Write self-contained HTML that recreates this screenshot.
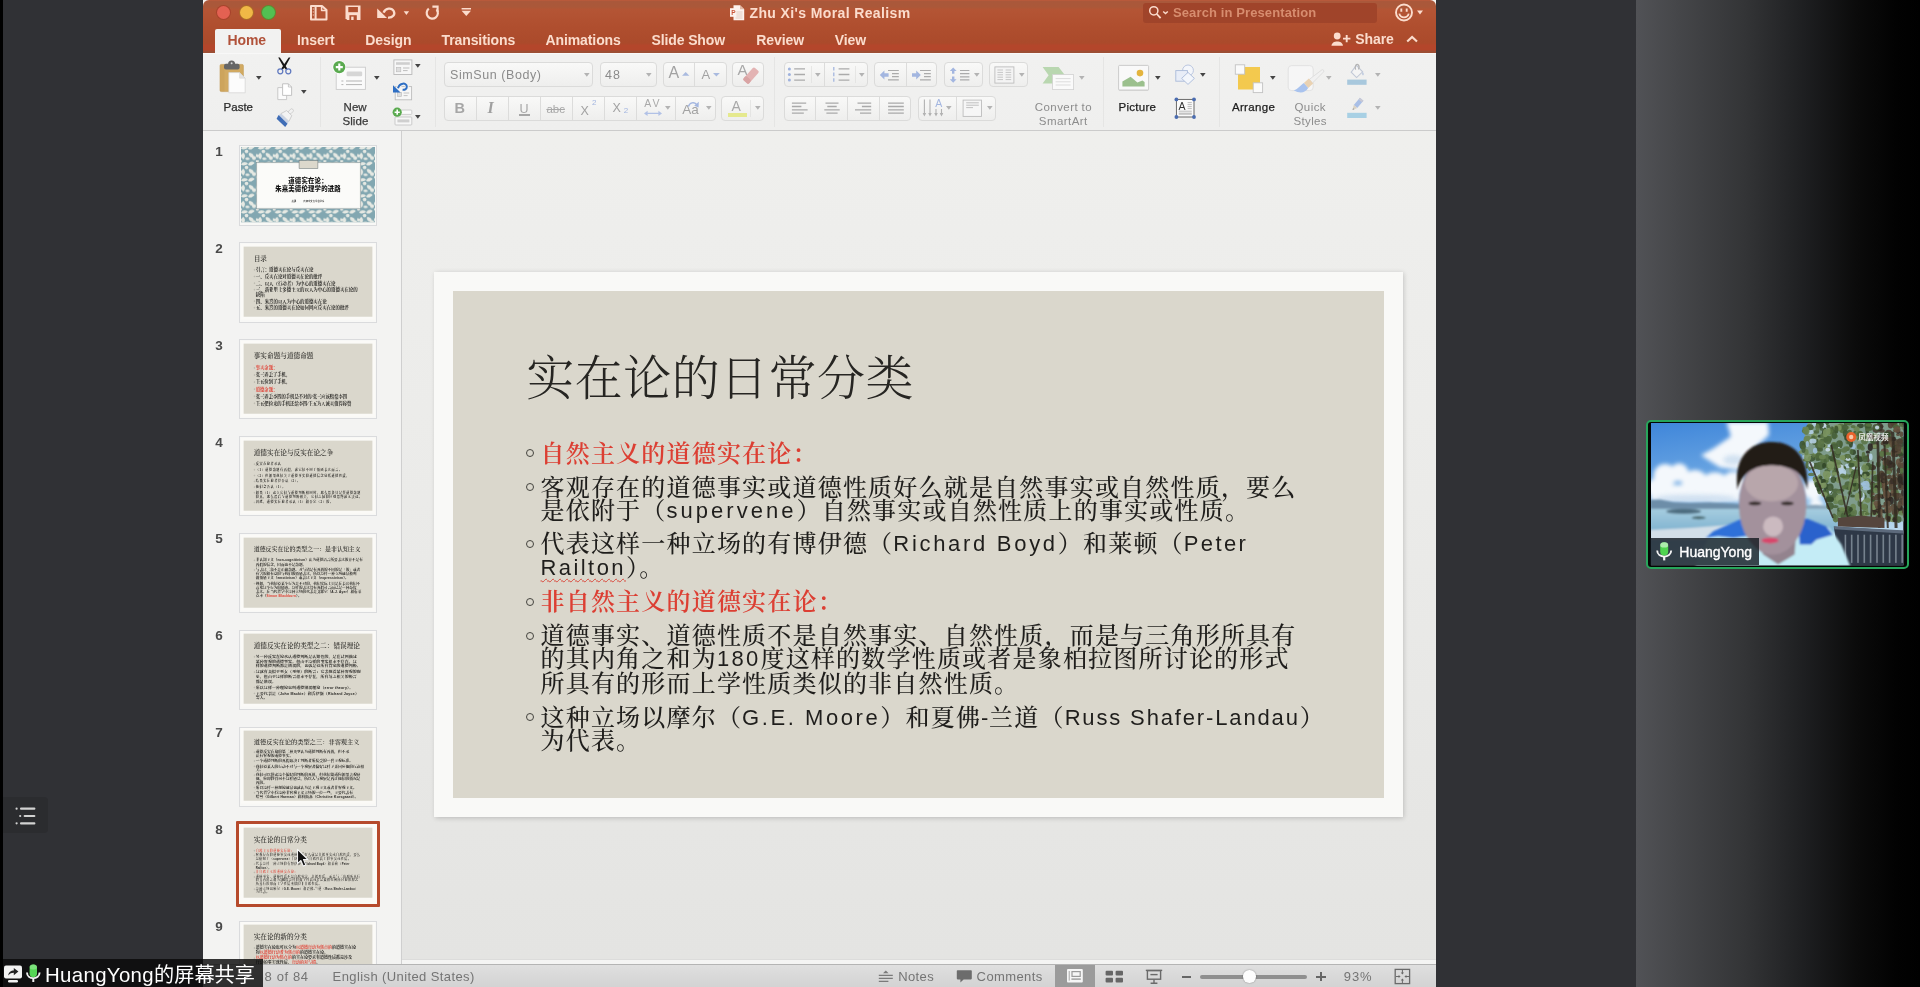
<!DOCTYPE html>
<html lang="zh">
<head>
<meta charset="utf-8">
<title>Zhu Xi's Moral Realism</title>
<style>
*{box-sizing:border-box;margin:0;padding:0}
html,body{width:1920px;height:987px;overflow:hidden;background:#303135}
body{position:relative;font-family:"Liberation Sans","Noto Sans CJK SC",sans-serif;color:#333}
.abs,.abs2 *{position:absolute}
svg{position:absolute;overflow:visible}
#blackl{left:0;top:0;width:3px;height:987px;background:#000}
#rpanel{left:1636px;top:0;width:284px;height:987px;background:linear-gradient(90deg,#515256 0px,#46474a 40px,#333436 110px,#1d1e20 170px,#0b0b0b 220px,#020202 260px,#000 284px)}
#win{left:203px;top:0;width:1233.4px;height:987px;background:linear-gradient(180deg,#efefed 0,#efefed 140px,#ebebe9 500px,#e4e4e2 958px,#e4e4e2 100%);overflow:hidden}
#pc{left:-203px;top:0;width:1920px;height:987px}
#titlebar{left:203px;top:0;width:1233.4px;height:52.5px;border-radius:6px 6px 0 0;box-shadow:0 -8px 0 8px #f4f2ee;background:linear-gradient(180deg,#be5a3b 0,#a9583b 1.6px,#ab5839 7px,#b45535 9.5px,#b04f2f 25px,#ab4a2b 43px,#b4462b 45.5px,#b3462b 50px,#9c4e34 51.4px,#9c4e34 52.5px)}
#ribbon{left:203px;top:52.5px;width:1233.4px;height:78.5px;background:linear-gradient(180deg,#fbfbfb 0,#f1f1f0 1.6px,#efefee 100%);border-bottom:1px solid #cbcbcb}
#thumbs{left:203px;top:131px;width:199px;height:834px;background:#f3f3f2;border-right:1px solid #cfcfcf}
#status{left:203px;top:964px;width:1234px;height:23px;background:linear-gradient(#dfdfdf,#d3d3d3);border-top:1px solid #b4b4b4}
.stx{top:968px;height:18px;line-height:18px;font-size:13px;letter-spacing:.4px;color:#747474;white-space:nowrap}
/* title bar */
.tl{width:13px;height:13px;border-radius:50%;top:5.5px}
.tab{top:31px;height:18px;line-height:18px;font-size:14px;font-weight:bold;color:#fbdccd;white-space:nowrap;letter-spacing:-.1px}
#hometab{left:215px;top:28.5px;width:65.5px;height:25.5px;background:#f2f2f1;border-radius:2px 2px 0 0}

/* ribbon */
.vsep{top:57px;width:1px;height:70px;background:#e5e5e4}
.grp{border:1px solid #dbdbda;border-radius:4px;background:linear-gradient(#f9f9f8,#eeeeed)}
.gdv{width:1px;background:#dcdcdb}
.lbl{top:99px;height:16px;line-height:16px;font-size:11.5px;color:#2b2b2b;white-space:nowrap;-webkit-text-stroke:.25px}
.dtx{color:#8b8b8b;white-space:nowrap}
/* thumbs */
.tnum{left:212px;width:14px;text-align:center;font-size:13.5px;font-weight:bold;color:#4a4a4a;height:16px;line-height:16px}
.tfr{background:#f8f8f6;border:1px solid #dadbdd}
.tsl{width:969px;height:545px;transform:scale(.1383);transform-origin:0 0;background:#fbfaf7;overflow:hidden;font-family:"Liberation Serif","Noto Serif CJK SC",serif;color:#1f1e1c}
.tsl>*{position:absolute}
.tbg{left:19px;top:19px;width:931px;height:507px;background:#dad7cc}
.tt{left:92px;top:69px;height:70px;line-height:70px;font-size:48px;white-space:nowrap;color:#262522;font-weight:500}
.tb{left:107px;white-space:nowrap;font-weight:700}
.tb .r,.tb.r{color:#e0392d}
.tb .e{font-family:"Liberation Sans",sans-serif;font-size:.9em;letter-spacing:.06em}
.tbu{left:93px;width:8px;height:8px;border:1.5px solid #3a3936;border-radius:50%}
.t1{left:0;width:969px;text-align:center;font-family:"Liberation Sans","Noto Sans CJK SC",sans-serif;font-weight:900;font-size:46px;letter-spacing:1.5px;height:56px;line-height:56px;color:#111;white-space:nowrap}
/* slide */
#slideframe{left:434px;top:272px;width:969px;height:545px;background:#f9f9f7;box-shadow:.5px 1px 5px rgba(0,0,0,.2)}
#slidebg{left:19px;top:19px;width:931px;height:507px;background:#dad7cc}
.sl{left:540.5px;height:30px;line-height:30px;font-size:24px;letter-spacing:1.2px;color:#1f1e1c;white-space:nowrap;font-family:"Liberation Serif","Noto Serif CJK SC",serif;font-weight:500}
.sl.red{color:#dc3f33;font-weight:600}
.sl .en{font-family:"Liberation Sans",sans-serif;font-weight:400;font-size:22px;letter-spacing:0;position:relative;top:-1px}
.bl{left:526.3px;width:8.2px;height:8.2px;border:1.7px solid #45443f;border-radius:50%;margin-top:-.3px}
</style>
</head>
<body>
<div id="blackl" class="abs"></div>
<div id="rpanel" class="abs"></div>
<div id="win" class="abs" style="will-change:transform">
<div id="pc" class="abs">
  <!--TITLEBAR-->
  <div id="titlebar" class="abs"></div>
  <div class="abs tl" style="left:217px;background:#e36152;box-shadow:0 0 0 1px #a8432c"></div>
  <div class="abs tl" style="left:239.5px;background:#f0b846;box-shadow:0 0 0 1px #ab6a2a"></div>
  <div class="abs tl" style="left:261.5px;background:#52c052;box-shadow:0 0 0 1px #5f8a30"></div>
  <!-- quick access icons -->
  <svg style="left:309px;top:4px" width="20" height="18" viewBox="0 0 20 18" fill="none" stroke="#fbdccd" stroke-width="2" stroke-linejoin="round">
    <path d="M2 2 H13 L17.5 6 V15.5 H2 Z"/><path d="M6.6 2 V15.5"/><path d="M12.6 2.3 V6.6 H17.3" stroke-width="1.5"/>
    <path d="M4.3 4.5v1M4.3 7.5v1M4.3 10.5v1" stroke-width="1.1"/>
  </svg>
  <svg style="left:344px;top:4px" width="18" height="18" viewBox="0 0 18 18">
    <path d="M1.5 1.5 H16.5 V16 H3.2 L1.5 14.3 Z" fill="#fbdccd"/>
    <rect x="4.3" y="3" width="9.6" height="5.2" fill="#b0502f"/>
    <rect x="5.4" y="11.2" width="7.4" height="4.8" fill="#b0502f"/>
    <rect x="7.2" y="12.6" width="2.4" height="3.4" fill="#fbdccd"/>
  </svg>
  <svg style="left:376px;top:4px" width="36" height="18" viewBox="0 0 36 18">
    <path d="M7.6 8.6 C9.5 3.8 15.6 3.4 17.7 7 C19.6 10.6 16.6 14 12 13.6" fill="none" stroke="#fbdccd" stroke-width="2.3"/>
    <path d="M1.2 4.4 L11 13.9 H1.2 Z" fill="#fbdccd"/>
    <path d="M27.7 7.2 h5.4 l-2.7 3.7z" fill="#fbdccd"/>
  </svg>
  <svg style="left:423px;top:3px" width="20" height="20" viewBox="0 0 20 20">
    <path d="M5.8 5.6 A5.6 5.6 0 1 0 13.6 6.4" fill="none" stroke="#fbdccd" stroke-width="2.2"/>
    <path d="M9.4 3.6 H14.6 V9" fill="none" stroke="#fbdccd" stroke-width="2.1"/>
  </svg>
  <svg style="left:459px;top:6px" width="14" height="12" viewBox="0 0 14 12">
    <rect x="2.6" y="2" width="9.4" height="1.5" fill="#fbdccd"/><path d="M2.6 4.8 h9.4 l-4.7 5.2z" fill="#fbdccd"/>
  </svg>
  <!-- doc icon + title -->
  <svg style="left:729px;top:4px" width="17" height="18" viewBox="0 0 17 18">
    <path d="M4.5 1.2 H11 L15.2 5.2 V16.2 H4.5 Z" fill="#fdf3ee"/>
    <path d="M11 1.2 V5.2 H15.2 Z" fill="#e3b9a6"/>
    <path d="M6.5 8h7M6.5 10h7M6.5 12h7M6.5 14h7" stroke="#d9c3b8" stroke-width=".8"/>
    <rect x="1" y="4.2" width="6.4" height="8.6" fill="#fdf3ee"/>
    <text x="2.3" y="11" font-family="Liberation Sans,sans-serif" font-weight="bold" font-size="6.5" fill="#c9573a">P</text>
  </svg>
  <div class="abs" id="wtitle" style="left:749.5px;top:4px;height:18px;line-height:18px;font-size:14px;letter-spacing:.38px;font-weight:bold;color:#fbdccd;white-space:nowrap">Zhu Xi's Moral Realism</div>
  <!-- search -->
  <div class="abs" style="left:1143px;top:2.5px;width:234px;height:20px;background:#a0442a;border-radius:3px"></div>
  <svg style="left:1147px;top:4px" width="26" height="17" viewBox="0 0 26 17" fill="none" stroke="#fbdccd">
    <circle cx="6.8" cy="6.8" r="4.1" stroke-width="1.5"/><path d="M9.8 10 L13.6 14.2" stroke-width="1.8"/>
    <path d="M16.2 7.4 l2.3 2.2 l2.3 -2.2" stroke-width="1.4"/>
  </svg>
  <div class="abs" id="wsearch" style="left:1173px;top:4px;height:18px;line-height:18px;font-size:13px;letter-spacing:.11px;font-weight:bold;color:#d78d6f;white-space:nowrap">Search in Presentation</div>
  <!-- smiley -->
  <svg style="left:1393px;top:1px" width="34" height="24" viewBox="0 0 34 24" fill="none" stroke="#fbdccd">
    <circle cx="11" cy="11.5" r="8" stroke-width="1.9"/>
    <path d="M8.3 7.4v3.4M13.7 7.4v3.4" stroke-width="1.9"/>
    <path d="M6.3 12.6 C7.5 17.6 14.5 17.6 15.7 12.6" stroke-width="1.8"/>
    <path d="M24 9.6 h6 l-3 3.8z" fill="#fbdccd" stroke="none"/>
  </svg>
  <!-- tabs -->
  <div id="hometab" class="abs"></div>
  <div class="abs tab" id="t0" style="left:227.5px;color:#b1523a">Home</div>
  <div class="abs tab" id="t1" style="left:297px">Insert</div>
  <div class="abs tab" id="t2" style="left:365.3px">Design</div>
  <div class="abs tab" id="t3" style="left:441.5px">Transitions</div>
  <div class="abs tab" id="t4" style="left:545.5px">Animations</div>
  <div class="abs tab" id="t5" style="left:651.4px">Slide Show</div>
  <div class="abs tab" id="t6" style="left:756.3px">Review</div>
  <div class="abs tab" id="t7" style="left:834.7px">View</div>
  <!-- share -->
  <svg style="left:1330px;top:31px" width="24" height="16" viewBox="0 0 24 16" fill="#fbdccd">
    <circle cx="7.2" cy="5" r="3.4"/><path d="M1.5 14.8 C1.5 9 12.9 9 12.9 14.8 Z"/>
    <path d="M13 7.6 h7.4 M16.7 3.9 v7.4" stroke="#fbdccd" stroke-width="1.9" fill="none"/>
  </svg>
  <div class="abs tab" id="tshare" style="left:1355.3px;top:30px;font-size:14px">Share</div>
  <svg style="left:1404px;top:33px" width="16" height="12" viewBox="0 0 16 12" fill="none" stroke="#fbdccd" stroke-width="2.1">
    <path d="M3.2 8.6 L8.1 4 L13 8.6"/>
  </svg>
  <!--/TITLEBAR-->
  <!--RIBBON-->
  <div id="ribbon" class="abs"></div>
  <div class="abs vsep" style="left:319.5px"></div>
  <div class="abs vsep" style="left:435.3px"></div>
  <div class="abs vsep" style="left:773.5px"></div>
  <div class="abs vsep" style="left:1103.3px"></div>
  <div class="abs vsep" style="left:1218.5px"></div>
  <div class="abs grp" style="left:444.4px;top:62px;width:149.10px;height:25px"></div>
  <div class="abs grp" style="left:599.7px;top:62px;width:57.30px;height:25px"></div>
  <div class="abs grp" style="left:662.5px;top:62px;width:64.00px;height:25px"></div>
  <div class="abs gdv" style="left:693.9px;top:63px;height:23px"></div>
  <div class="abs grp" style="left:732.2px;top:62px;width:31.60px;height:25px"></div>
  <div class="abs grp" style="left:783.7px;top:62px;width:84.60px;height:25px"></div>
  <div class="abs gdv" style="left:823.9px;top:63px;height:23px"></div>
  <div class="abs gdv" style="left:810.7px;top:66px;height:17px;opacity:.6"></div>
  <div class="abs gdv" style="left:855.1px;top:66px;height:17px;opacity:.6"></div>
  <div class="abs grp" style="left:874.4px;top:62px;width:63.10px;height:25px"></div>
  <div class="abs gdv" style="left:905.5px;top:63px;height:23px"></div>
  <div class="abs grp" style="left:943.5px;top:62px;width:39.50px;height:25px"></div>
  <div class="abs grp" style="left:988.5px;top:62px;width:39.50px;height:25px"></div>
  <div class="abs grp" style="left:444.4px;top:95.5px;width:271.20px;height:25.5px"></div>
  <div class="abs gdv" style="left:475.5px;top:96.5px;height:23.5px"></div>
  <div class="abs gdv" style="left:508.0px;top:96.5px;height:23.5px"></div>
  <div class="abs gdv" style="left:539.8px;top:96.5px;height:23.5px"></div>
  <div class="abs gdv" style="left:571.5px;top:96.5px;height:23.5px"></div>
  <div class="abs gdv" style="left:603.9px;top:96.5px;height:23.5px"></div>
  <div class="abs gdv" style="left:636.1px;top:96.5px;height:23.5px"></div>
  <div class="abs gdv" style="left:674.8px;top:96.5px;height:23.5px"></div>
  <div class="abs grp" style="left:721px;top:95.5px;width:42.80px;height:25.5px"></div>
  <div class="abs gdv" style="left:749.7px;top:99.5px;height:17.5px;opacity:.6"></div>
  <div class="abs grp" style="left:783.7px;top:95.5px;width:127.80px;height:25.5px"></div>
  <div class="abs gdv" style="left:815.1px;top:96.5px;height:23.5px"></div>
  <div class="abs gdv" style="left:847.0px;top:96.5px;height:23.5px"></div>
  <div class="abs gdv" style="left:879.1px;top:96.5px;height:23.5px"></div>
  <div class="abs grp" style="left:917.5px;top:95.5px;width:78.80px;height:25.5px"></div>
  <div class="abs gdv" style="left:956.0px;top:96.5px;height:23.5px"></div>
  <!-- Paste -->
  <svg style="left:219px;top:60px" width="28" height="34" viewBox="0 0 28 34">
    <rect x="1" y="4.4" width="23.4" height="27.2" rx="1.4" fill="#d2aa62" stroke="#c29a55" stroke-width=".6"/>
    <rect x="1.4" y="4.8" width="4" height="26.4" fill="#c9a058" opacity=".6"/>
    <circle cx="12.6" cy="4" r="3.5" fill="#666"/>
    <rect x="5" y="3.8" width="15.6" height="5.8" rx="2" fill="#666"/>
    <circle cx="12.6" cy="3.3" r="1" fill="#d8d8d8"/>
    <path d="M9.8 12.6 H20.6 L26.2 18.2 V32.8 H9.8 Z" fill="#fcfcfc" stroke="#d2d2d2" stroke-width=".7"/>
    <path d="M20.6 12.6 V18.2 H26.2 Z" fill="#e3e3e3" stroke="#cfcfcf" stroke-width=".5"/>
  </svg>
  <div class="abs lbl" id="lpaste" style="left:223.6px">Paste</div>
  <!-- Cut -->
  <svg style="left:276px;top:57px" width="17" height="18" viewBox="0 0 17 18" fill="none">
    <path d="M2.2 .6 L3.9 .4 L10.6 10.6 L11.6 12.6 L9.8 12.4 L7.2 9.6 Z" fill="#151515"/>
    <path d="M14.4 .6 L12.7 .4 L6 10.6 L5 12.6 L6.8 12.4 L9.4 9.6 Z" fill="#151515"/>
    <circle cx="4.3" cy="14.3" r="2.5" stroke="#5f78bf" stroke-width="1.25"/>
    <circle cx="12.3" cy="14.3" r="2.5" stroke="#5f78bf" stroke-width="1.25"/>
  </svg>
  <!-- Copy -->
  <svg style="left:277px;top:83px" width="16" height="18" viewBox="0 0 16 18">
    <path d="M.8 4.6 H9.6 V16.6 H.8 Z" fill="#fbfbfb" stroke="#c4c4c4" stroke-width=".9"/>
    <path d="M5.6 .8 H11.4 L14.6 4 V12.4 H5.6 Z" fill="#fff" stroke="#bcbcbc" stroke-width=".9"/>
    <path d="M11.4 .8 V4 H14.6" fill="none" stroke="#bcbcbc" stroke-width=".8"/>
  </svg>
  <!-- Format painter -->
  <svg style="left:275.5px;top:108.5px" width="19" height="17" viewBox="0 0 19 17">
    <g transform="translate(10,7.4) rotate(44)">
      <rect x="-1.7" y="-9.8" width="3.4" height="5.6" rx="1.6" fill="#f1f1f1" stroke="#bdbdbd" stroke-width=".6"/>
      <path d="M-3.6 -4.6 H3.6 L5.6 1.6 H-5.6 Z" fill="#f3f3f3" stroke="#b9b9b9" stroke-width=".6"/>
      <path d="M-5.6 1.6 H5.6 L6.2 4.4 H-6.2 Z" fill="#c9d3e4"/>
      <path d="M-6.2 4.2 H6.2 L6.8 8.2 H-5.2 Z" fill="#3f6db6"/>
    </g>
  </svg>
  <!-- New Slide -->
  <svg style="left:331px;top:59px" width="36" height="32" viewBox="0 0 36 32">
    <rect x="5.2" y="8.2" width="29.2" height="22.2" fill="#fafafa" stroke="#c9c9c9" stroke-width=".9"/>
    <rect x="15.6" y="12.6" width="15.6" height="4.6" rx="1.2" fill="#d6d6d6"/>
    <path d="M15 22 H31 M15 25.6 H31" stroke="#b4b4b4" stroke-width="1"/>
    <path d="M10.4 22 h2 M10.4 25.6 h2" stroke="#b4b4b4" stroke-width="1"/>
    <circle cx="8.3" cy="8.1" r="6.9" fill="#fff"/>
    <circle cx="8.3" cy="8.1" r="6.1" fill="#5aaa4f"/>
    <path d="M4.8 8.1 h7 M8.3 4.6 v7" stroke="#fff" stroke-width="2.1"/>
  </svg>
  <div class="abs lbl" id="lnew" style="left:343.6px;color:#3a3a3a">New</div>
  <div class="abs lbl" id="lslide" style="left:342.4px;top:112.5px;letter-spacing:.12px;color:#3a3a3a">Slide</div>
  <!-- Layout -->
  <svg style="left:392.5px;top:58.8px" width="20" height="17" viewBox="0 0 20 17">
    <rect x=".9" y=".9" width="18" height="14.6" fill="#f7f7f7" stroke="#b9b9b9" stroke-width=".9"/>
    <rect x="3" y="3.2" width="13.8" height="2.6" fill="#cfcfcf"/>
    <rect x="3.4" y="8.4" width="4.4" height="4.4" fill="#dedede" stroke="#bcbcbc" stroke-width=".6"/>
    <path d="M10 9 h6.4 M10 11.6 h4.6" stroke="#bdbdbd" stroke-width="1"/>
  </svg>
  <!-- Reset -->
  <svg style="left:391.5px;top:80.5px" width="21" height="20" viewBox="0 0 21 20">
    <rect x="3.2" y="5.6" width="16.4" height="13.2" fill="#f7f7f7" stroke="#bcbcbc" stroke-width=".9"/>
    <rect x="5.4" y="11.4" width="4.2" height="4.2" fill="#dedede" stroke="#bcbcbc" stroke-width=".6"/>
    <path d="M11.6 12 h5.6 M11.6 14.6 h4" stroke="#c2c2c2" stroke-width="1"/>
    <path d="M6 7.2 C7.4 1.6 14.6 1.2 14.8 5.6 C14.9 7.8 13 9 10.6 8.8" fill="none" stroke="#f3f3f2" stroke-width="4"/>
    <path d="M6 7.2 C7.4 1.6 14.6 1.2 14.8 5.6 C14.9 7.8 13 9 10.6 8.8" fill="none" stroke="#2f6fc4" stroke-width="2"/>
    <path d="M1 4.2 L8.6 11.4 H1 Z" fill="#2f6fc4"/>
  </svg>
  <!-- Section -->
  <svg style="left:391.5px;top:106.5px" width="21" height="19" viewBox="0 0 21 19">
    <rect x="8.4" y="3" width="11.4" height="4.4" rx=".8" fill="#fbfbfb" stroke="#c4c4c4" stroke-width=".8"/>
    <rect x="3" y="10" width="16.8" height="8" rx=".8" fill="#f7f7f7" stroke="#c0c0c0" stroke-width=".8"/>
    <rect x="5.4" y="12.4" width="12" height="3" fill="#cfcfcf"/>
    <circle cx="5.2" cy="5.2" r="4.6" fill="#5aaa4f"/>
    <path d="M2.6 5.2 h5.2 M5.2 2.6 v5.2" stroke="#fff" stroke-width="1.6"/>
  </svg>
  <!-- font combos -->
  <div class="abs dtx" id="lfont" style="left:450px;top:65.6px;font-size:12.5px;letter-spacing:.58px;line-height:18px;height:18px">SimSun (Body)</div>
  <div class="abs dtx" id="lsize" style="left:605px;top:65.6px;font-size:12.5px;letter-spacing:1px;line-height:18px;height:18px">48</div>
  <!-- A up / A down -->
  <div class="abs dtx" style="left:668.4px;top:63.3px;font-size:16px;line-height:20px;height:20px;color:#a2a2a2">A</div>
  <svg style="left:681.6px;top:72.2px" width="7.4" height="3.8" viewBox="0 0 7.4 3.8"><path d="M0 3.8 L3.7 0 L7.4 3.8 Z" fill="#a9badf"/></svg>
  <div class="abs dtx" style="left:701.6px;top:64.6px;font-size:13px;line-height:20px;height:20px;color:#a2a2a2">A</div>
  <svg style="left:712.8px;top:73.2px" width="6.8" height="3.6" viewBox="0 0 6.8 3.6"><path d="M0 0 H6.8 L3.4 3.6 Z" fill="#a9badf"/></svg>
  <!-- clear formatting -->
  <div class="abs dtx" style="left:737.6px;top:59.8px;font-size:15px;line-height:20px;height:20px;color:#a8a8a8">A</div>
  <svg style="left:741px;top:66px" width="20" height="20" viewBox="0 0 20 20">
    <g transform="translate(10,9.6) rotate(-48)"><rect x="-8.4" y="-3.7" width="16.8" height="7.4" rx="1.6" fill="#e3b3b3"/><rect x="-8.4" y="-3.7" width="5" height="7.4" rx="1.6" fill="#d9a4a4"/></g>
  </svg>
  <!-- bullets -->
  <svg style="left:786px;top:65px" width="22" height="19" viewBox="0 0 22 19">
    <circle cx="3.4" cy="3.9" r="1.5" fill="#9fb2de"/><circle cx="3.4" cy="9.5" r="1.5" fill="#9fb2de"/><circle cx="3.4" cy="15.1" r="1.5" fill="#9fb2de"/>
    <path d="M8.2 3.9 H19 M8.2 9.5 H19 M8.2 15.1 H19" stroke="#ababab" stroke-width="1.3"/>
  </svg>
  <!-- numbering -->
  <svg style="left:830px;top:65px" width="22" height="19" viewBox="0 0 22 19">
    <path d="M3.8 2 v3.6 M3.8 7.6 v3.6 M3.8 13.2 v3.6" stroke="#9fb2de" stroke-width="1.2"/>
    <path d="M8.6 3.9 H19.4 M8.6 9.5 H19.4 M8.6 15.1 H19.4" stroke="#ababab" stroke-width="1.3"/>
  </svg>
  <!-- decrease indent -->
  <svg style="left:878px;top:66px" width="24" height="18" viewBox="0 0 24 18">
    <path d="M1.8 9 L6.4 4.6 V7.2 H10.6 V10.8 H6.4 V13.4 Z" fill="#a3b6e0"/>
    <path d="M10 4.5 H20.8 M14 7.6 H20.8 M14 10.7 H20.8 M10 13.8 H20.8" stroke="#ababab" stroke-width="1.2"/>
  </svg>
  <!-- increase indent -->
  <svg style="left:910px;top:66px" width="24" height="18" viewBox="0 0 24 18">
    <path d="M10.8 9 L6.2 4.6 V7.2 H2 V10.8 H6.2 V13.4 Z" fill="#a3b6e0"/>
    <path d="M10 4.5 H20.8 M14 7.6 H20.8 M14 10.7 H20.8 M10 13.8 H20.8" stroke="#ababab" stroke-width="1.2"/>
  </svg>
  <!-- line spacing -->
  <svg style="left:948px;top:65px" width="24" height="20" viewBox="0 0 24 20">
    <path d="M5.2 2.4 L8.6 6 H6.4 V8.8 H4 V6 H1.8 Z" fill="#a3b6e0"/>
    <path d="M5.2 17.8 L8.6 14.2 H6.4 V11.4 H4 V14.2 H1.8 Z" fill="#a3b6e0"/>
    <path d="M12 5.5 H21.4 M12 8.6 H21.4 M12 11.8 H21.4 M12 14.9 H21.4" stroke="#ababab" stroke-width="1.2"/>
  </svg>
  <!-- columns -->
  <svg style="left:994px;top:66px" width="21" height="18" viewBox="0 0 21 18">
    <rect x=".9" y=".9" width="19" height="16.2" fill="#f4f4f4" stroke="#bdbdbd" stroke-width=".9"/>
    <path d="M3.4 4 h5.6 M3.4 6.4 h5.6 M3.4 8.8 h5.6 M3.4 11.2 h5.6 M3.4 13.6 h5.6 M11.6 4 h5.6 M11.6 6.4 h5.6 M11.6 8.8 h5.6 M11.6 11.2 h5.6 M11.6 13.6 h5.6" stroke="#c6c6c6" stroke-width="1"/>
  </svg>
  <!-- Row 2 -->
  <div class="abs dtx" style="left:454.6px;top:98.2px;font-size:14.5px;font-weight:bold;line-height:20px;height:20px;color:#a6a6a6">B</div>
  <div class="abs dtx" style="left:487.6px;top:97.6px;font-size:16px;font-style:italic;font-weight:bold;font-family:'Liberation Serif',serif;line-height:20px;height:20px;color:#a0a0a0">I</div>
  <div class="abs dtx" style="left:519.6px;top:98.6px;font-size:12.5px;line-height:20px;height:20px;color:#a6a6a6">U</div>
  <div class="abs" style="left:519px;top:114.4px;width:10.6px;height:1.2px;background:#a6a6a6"></div>
  <div class="abs dtx" style="left:546.4px;top:98.6px;font-size:11.5px;line-height:20px;height:20px;color:#a9a9a9;text-decoration:line-through">abc</div>
  <div class="abs dtx" style="left:580.4px;top:100.6px;font-size:12.5px;line-height:20px;height:20px;color:#a2a2a2">X</div>
  <div class="abs dtx" style="left:592px;top:95.6px;font-size:8px;line-height:14px;height:14px;color:#a3b6e0">2</div>
  <div class="abs dtx" style="left:612.4px;top:97.6px;font-size:12.5px;line-height:20px;height:20px;color:#a2a2a2">X</div>
  <div class="abs dtx" style="left:623.8px;top:104.4px;font-size:8px;line-height:14px;height:14px;color:#a3b6e0">2</div>
  <div class="abs dtx" style="left:644.2px;top:95.4px;font-size:10.5px;letter-spacing:2.2px;line-height:16px;height:16px;color:#a9a9a9">AV</div>
  <svg style="left:643px;top:110px" width="20" height="7" viewBox="0 0 20 7"><path d="M1 3.4 L4.6 .8 V2.8 H15.4 V.8 L19 3.4 L15.4 6 V4 H4.6 V6 Z" fill="#b1c1e6"/></svg>
  <div class="abs dtx" style="left:682.2px;top:100.4px;font-size:13.5px;line-height:20px;height:20px;color:#a2a2a2">Aa</div>
  <svg style="left:687px;top:100px" width="13" height="9" viewBox="0 0 13 9"><path d="M1.4 6.6 C2.6 2.4 7 1.6 9.6 4.4" fill="none" stroke="#a3b6e0" stroke-width="1.5"/><path d="M7.2 5.8 L11.8 1.8 L11.6 7.6 Z" fill="#a3b6e0"/></svg>
  <div class="abs dtx" style="left:731.4px;top:96.4px;font-size:14px;line-height:20px;height:20px;color:#a8a8a8">A</div>
  <div class="abs" style="left:728px;top:113px;width:19px;height:4px;background:#e5e98e"></div>
  <!-- aligns -->
  <svg style="left:790px;top:101px" width="20" height="14" viewBox="0 0 20 14"><path d="M1.9 2.2 H16.2 M1.9 5.5 H11.4 M1.9 8.8 H17.6 M1.9 12.2 H13.8" stroke="#a9a9a9" stroke-width="1.3"/></svg>
  <svg style="left:821.5px;top:101px" width="20" height="14" viewBox="0 0 20 14"><path d="M3.5 2.2 H16.5 M5.3 5.5 H14.7 M2.3 8.8 H17.7 M4.4 12.2 H15.6" stroke="#a9a9a9" stroke-width="1.3"/></svg>
  <svg style="left:853px;top:101px" width="20" height="14" viewBox="0 0 20 14"><path d="M4.5 2.2 H18.2 M8.9 5.5 H18.2 M2 8.8 H18.2 M7 12.2 H18.2" stroke="#a9a9a9" stroke-width="1.3"/></svg>
  <svg style="left:886px;top:101px" width="20" height="14" viewBox="0 0 20 14"><path d="M2.1 2.2 H17.8 M2.1 5.5 H17.8 M2.1 8.8 H17.8 M2.1 12.2 H17.8" stroke="#a9a9a9" stroke-width="1.3"/></svg>
  <!-- text direction -->
  <svg style="left:921px;top:98px" width="24" height="21" viewBox="0 0 24 21">
    <path d="M3.4 1.6 V17 M9 1.6 V17" stroke="#b2b2b2" stroke-width="1.1"/>
    <path d="M1.6 15 L3.4 18.6 L5.2 15 Z M7.2 15 L9 18.6 L10.8 15 Z" fill="#b2b2b2"/>
    <path d="M15 11 V17 M20.5 11 V17" stroke="#b2b2b2" stroke-width="1.1"/>
    <path d="M13.2 15 L15 18.6 L16.8 15 Z M18.7 15 L20.5 18.6 L22.3 15 Z" fill="#b2b2b2"/>
  </svg>
  <div class="abs dtx" style="left:935.2px;top:95.2px;font-size:10.5px;line-height:16px;height:16px;color:#a3b6e0">A</div>
  <!-- align text -->
  <svg style="left:962px;top:99px" width="21" height="19" viewBox="0 0 21 19">
    <rect x="1.1" y="1.1" width="18.4" height="16.3" fill="#f6f6f6" stroke="#bdbdbd" stroke-width=".9"/>
    <path d="M4.2 3.8 H16.8 M4.2 6.2 H16.8 M4.2 8.6 H11" stroke="#c0c0c0" stroke-width="1"/>
  </svg>
  <!-- SmartArt -->
  <svg style="left:1041px;top:65px" width="35" height="27" viewBox="0 0 35 27">
    <path d="M1.6 2 H17.6 L24 10.2 L17.6 18.4 H1.6 L7.6 10.2 Z" fill="#b9d7b0"/>
    <rect x="11.6" y="9.6" width="21" height="15" fill="#fafafa" stroke="#d2d2d2" stroke-width=".8"/>
    <path d="M14.6 13.6 H29.6 M14.6 16.8 H29.6 M14.6 20 H29.6" stroke="#dcdcdc" stroke-width="1"/>
  </svg>
  <div class="abs lbl" id="lconv" style="left:1034.8px;letter-spacing:.42px;color:#8c8c8c;-webkit-text-stroke:0">Convert to</div>
  <div class="abs lbl" id="lsmart" style="left:1038.8px;top:112.5px;letter-spacing:.45px;color:#8c8c8c;-webkit-text-stroke:0">SmartArt</div>
  <!-- Picture -->
  <svg style="left:1117px;top:63.5px" width="34" height="29" viewBox="0 0 34 29">
    <rect x="1.6" y="1.8" width="30" height="25" rx="1" fill="#d8d8d8"/>
    <rect x="1.6" y="1.4" width="30" height="24.6" rx="1" fill="#f9f9f9" stroke="#c3c3c3" stroke-width=".8"/>
    <circle cx="23" cy="9.1" r="3.3" fill="#e4b43d"/>
    <path d="M5.4 22.6 V17.4 L13.6 12.8 L20.4 18.6 L25.4 16.4 L27.6 18 V22.6 Z" fill="#9bc08d"/>
  </svg>
  <div class="abs lbl" id="lpic" style="left:1118.6px;letter-spacing:.26px;color:#1d1d1d">Picture</div>
  <!-- Shapes -->
  <svg style="left:1174px;top:63px" width="24" height="24" viewBox="0 0 24 24">
    <circle cx="14" cy="7.4" r="5.4" fill="#f4f6fa" stroke="#b3c1dc" stroke-width=".9"/>
    <rect x="1.8" y="7.6" width="11.6" height="10.6" fill="#e8edf7" stroke="#a9bad9" stroke-width=".9"/>
    <path d="M14 9.4 L20.4 15.4 L14 21.4 L7.6 15.4 Z" fill="#f3f6fb" stroke="#a9bad9" stroke-width=".9"/>
  </svg>
  <!-- Text box -->
  <svg style="left:1173px;top:96px" width="25" height="25" viewBox="0 0 25 25">
    <rect x="3.4" y="3.4" width="17.6" height="17.6" fill="#fafafa" stroke="#5c5c5c" stroke-width=".9"/>
    <path d="M14.6 6.6 h4.2 M14.6 8.6 h4.2 M14.6 10.6 h4.2 M14.6 12.6 h4.2" stroke="#b5b5b5" stroke-width=".9"/>
    <path d="M5.8 15.2 h13 " stroke="#b5b5b5" stroke-width=".9"/>
    <rect x="5.8" y="16.6" width="13" height="2.2" fill="#c4c4c4"/>
    <circle cx="3.4" cy="3.4" r="1.9" fill="#4a6cb0"/><circle cx="21" cy="3.4" r="1.9" fill="#4a6cb0"/><circle cx="3.4" cy="21" r="1.9" fill="#4a6cb0"/><circle cx="21" cy="21" r="1.9" fill="#4a6cb0"/>
    <text x="5.6" y="13.6" font-family="Liberation Sans,sans-serif" font-size="10.5" fill="#333">A</text>
  </svg>
  <!-- Arrange -->
  <svg style="left:1233px;top:63px" width="31" height="31" viewBox="0 0 31 31">
    <rect x="5" y="4" width="22" height="22.5" fill="#f3c94e"/>
    <rect x="2.3" y="1.8" width="9.4" height="9.4" fill="#fafafa" stroke="#c2c2c2" stroke-width=".9"/>
    <rect x="20.2" y="19.8" width="9.4" height="9.8" fill="#fafafa" stroke="#c2c2c2" stroke-width=".9"/>
  </svg>
  <div class="abs lbl" id="larr" style="left:1231.9px;letter-spacing:.33px;color:#1d1d1d">Arrange</div>
  <!-- Quick styles -->
  <svg style="left:1286px;top:63px" width="40" height="33" viewBox="0 0 40 33">
    <rect x="2.2" y="2.6" width="25" height="25" rx="3.4" fill="#f6f6f6" stroke="#e0e0e0" stroke-width=".9"/>
    <g transform="translate(23.5,19.4) rotate(49)">
      <path d="M-1.3 -18 Q0 -19.2 1.3 -18 L2.4 -2 H-2.4 Z" fill="#f1f1f1" stroke="#d9d9d9" stroke-width=".7"/>
      <rect x="-3.3" y="-2" width="6.6" height="6.6" fill="#ead2b2"/>
      <path d="M-3.3 4.6 H3.3 C5 10 2.6 14.6 -4.4 17 C-2.4 12.6 -4 9 -3.3 4.6 Z" fill="#a9c3ee"/>
    </g>
  </svg>
  <div class="abs lbl" id="lquick" style="left:1294.4px;letter-spacing:.45px;color:#8c8c8c;-webkit-text-stroke:0">Quick</div>
  <div class="abs lbl" id="lstyles" style="left:1293.5px;top:112.5px;letter-spacing:.36px;color:#8c8c8c;-webkit-text-stroke:0">Styles</div>
  <!-- Fill -->
  <svg style="left:1346px;top:62px" width="22" height="24" viewBox="0 0 22 24">
    <rect x="1.2" y="17.6" width="19.4" height="5.2" fill="#a8c8dd"/>
    <path d="M10.4 3.4 L16.6 9.8 L10.6 15.6 L5.2 10.2 Z" fill="#f4f4f4" stroke="#c1c8d6" stroke-width="1.1"/>
    <path d="M9.6 7.6 C8.2 3.4 10.8 1.2 12.4 3 C13.6 4.4 13 6.4 12.4 7.4" fill="none" stroke="#b4b4b4" stroke-width="1.2"/>
    <path d="M16.8 9.8 C17.8 11.4 18.2 12.6 17 13.4 C15.8 12.8 16 11.2 16.8 9.8Z" fill="#b9c6dd"/>
  </svg>
  <!-- Outline -->
  <svg style="left:1346px;top:96px" width="22" height="24" viewBox="0 0 22 24">
    <rect x="1.2" y="16.8" width="19.4" height="5.2" fill="#a8d0e4"/>
    <g transform="translate(10.8,9) rotate(40)">
      <rect x="-2.3" y="-7.6" width="4.6" height="9.6" fill="#a9bfe6"/>
      <rect x="-2.3" y="-7.6" width="4.6" height="2.2" fill="#c9c9d4"/>
      <path d="M-2.3 2 H2.3 L0 6.6 Z" fill="#d9d2c4"/>
      <path d="M-.9 4.8 H.9 L0 6.6 Z" fill="#9a9a9a"/>
    </g>
  </svg>
  <svg style="left:255.80px;top:76.10px" width="5.6" height="3.8" viewBox="0 0 5.6 3.8"><path d="M0 0H5.6L2.8 3.8Z" fill="#444"/></svg>
  <svg style="left:301.20px;top:89.50px" width="5.6" height="3.8" viewBox="0 0 5.6 3.8"><path d="M0 0H5.6L2.8 3.8Z" fill="#444"/></svg>
  <svg style="left:373.70px;top:76.10px" width="5.6" height="3.8" viewBox="0 0 5.6 3.8"><path d="M0 0H5.6L2.8 3.8Z" fill="#444"/></svg>
  <svg style="left:415.40px;top:63.60px" width="5.6" height="3.8" viewBox="0 0 5.6 3.8"><path d="M0 0H5.6L2.8 3.8Z" fill="#444"/></svg>
  <svg style="left:415.40px;top:114.50px" width="5.6" height="3.8" viewBox="0 0 5.6 3.8"><path d="M0 0H5.6L2.8 3.8Z" fill="#444"/></svg>
  <svg style="left:583.70px;top:72.90px" width="5.6" height="3.8" viewBox="0 0 5.6 3.8"><path d="M0 0H5.6L2.8 3.8Z" fill="#b3b3b3"/></svg>
  <svg style="left:646.20px;top:72.90px" width="5.6" height="3.8" viewBox="0 0 5.6 3.8"><path d="M0 0H5.6L2.8 3.8Z" fill="#b3b3b3"/></svg>
  <svg style="left:815.10px;top:72.90px" width="5.6" height="3.8" viewBox="0 0 5.6 3.8"><path d="M0 0H5.6L2.8 3.8Z" fill="#b3b3b3"/></svg>
  <svg style="left:859.10px;top:72.90px" width="5.6" height="3.8" viewBox="0 0 5.6 3.8"><path d="M0 0H5.6L2.8 3.8Z" fill="#b3b3b3"/></svg>
  <svg style="left:973.70px;top:72.90px" width="5.6" height="3.8" viewBox="0 0 5.6 3.8"><path d="M0 0H5.6L2.8 3.8Z" fill="#b3b3b3"/></svg>
  <svg style="left:1018.80px;top:72.90px" width="5.6" height="3.8" viewBox="0 0 5.6 3.8"><path d="M0 0H5.6L2.8 3.8Z" fill="#b3b3b3"/></svg>
  <svg style="left:665.20px;top:105.70px" width="5.6" height="3.8" viewBox="0 0 5.6 3.8"><path d="M0 0H5.6L2.8 3.8Z" fill="#b3b3b3"/></svg>
  <svg style="left:706.20px;top:105.70px" width="5.6" height="3.8" viewBox="0 0 5.6 3.8"><path d="M0 0H5.6L2.8 3.8Z" fill="#b3b3b3"/></svg>
  <svg style="left:754.50px;top:105.70px" width="5.6" height="3.8" viewBox="0 0 5.6 3.8"><path d="M0 0H5.6L2.8 3.8Z" fill="#b3b3b3"/></svg>
  <svg style="left:946.20px;top:105.70px" width="5.6" height="3.8" viewBox="0 0 5.6 3.8"><path d="M0 0H5.6L2.8 3.8Z" fill="#b3b3b3"/></svg>
  <svg style="left:987.00px;top:105.70px" width="5.6" height="3.8" viewBox="0 0 5.6 3.8"><path d="M0 0H5.6L2.8 3.8Z" fill="#b3b3b3"/></svg>
  <svg style="left:1079.20px;top:76.10px" width="5.6" height="3.8" viewBox="0 0 5.6 3.8"><path d="M0 0H5.6L2.8 3.8Z" fill="#b3b3b3"/></svg>
  <svg style="left:1154.50px;top:76.10px" width="5.6" height="3.8" viewBox="0 0 5.6 3.8"><path d="M0 0H5.6L2.8 3.8Z" fill="#444"/></svg>
  <svg style="left:1199.70px;top:72.90px" width="5.6" height="3.8" viewBox="0 0 5.6 3.8"><path d="M0 0H5.6L2.8 3.8Z" fill="#444"/></svg>
  <svg style="left:1270.00px;top:76.10px" width="5.6" height="3.8" viewBox="0 0 5.6 3.8"><path d="M0 0H5.6L2.8 3.8Z" fill="#444"/></svg>
  <svg style="left:1326.20px;top:76.10px" width="5.6" height="3.8" viewBox="0 0 5.6 3.8"><path d="M0 0H5.6L2.8 3.8Z" fill="#b3b3b3"/></svg>
  <svg style="left:1374.80px;top:72.70px" width="5.6" height="3.8" viewBox="0 0 5.6 3.8"><path d="M0 0H5.6L2.8 3.8Z" fill="#b3b3b3"/></svg>
  <svg style="left:1374.80px;top:105.90px" width="5.6" height="3.8" viewBox="0 0 5.6 3.8"><path d="M0 0H5.6L2.8 3.8Z" fill="#b3b3b3"/></svg>
  <!--/RIBBON-->
  <!--THUMBS-->
  <div id="thumbs" class="abs"></div>
  <div class="abs tnum" style="top:143.8px">1</div>
  <div class="abs tfr" style="left:238.6px;top:145.3px;width:138.8px;height:80.4px"></div>
  <div class="abs tsl" style="left:241px;top:146.9px"><svg width="969" height="545" viewBox="0 0 969 545" style="left:0;top:0">
<defs><pattern id="flo" width="122" height="116" patternUnits="userSpaceOnUse" x="-14" y="-20">
<g fill="#e6e9e3"><path d="M14 30c10-22 44-22 50-2-18 8-34 14-50 2z"/><path d="M66 34c2-26 34-32 46-14-16 14-26 24-46 14z"/><path d="M30 62c-18 12-18 40 4 48 10-18 14-32-4-48z"/><path d="M70 64c24-4 42 14 34 36-20-6-34-12-34-36z"/><circle cx="54" cy="52" r="13"/><circle cx="108" cy="100" r="14"/><circle cx="10" cy="6" r="11"/><path d="M2 70l20 6-6 22-18-8z"/><path d="M44 104c10-12 30-10 34 6-14 6-24 8-34-6z"/></g></pattern></defs>
<rect x="-6" y="-6" width="981" height="557" fill="#82a7b1"/><rect x="-6" y="-6" width="981" height="557" fill="url(#flo)"/>
<rect x="111" y="111" width="755" height="336" fill="#fbfbf9" stroke="#7f8f92" stroke-width="4"/>
<rect x="121" y="121" width="735" height="316" fill="none" stroke="#e6e9e6" stroke-width="2"/>
<rect x="420" y="98" width="136" height="58" fill="#dcd8cc" stroke="#6f7a7c" stroke-width="4"/>
</svg>
<div class="t1" style="top:217px">道德实在论：</div><div class="t1" style="top:271px">朱熹美德伦理学的进路</div>
<div class="t1" style="top:384px;font-size:17px;font-weight:400;letter-spacing:0;height:24px;line-height:24px">黄勇　　　香港中文大学哲学系</div></div>
  <div class="abs tnum" style="top:240.7px">2</div>
  <div class="abs tfr" style="left:238.6px;top:242.2px;width:138.8px;height:80.4px"></div>
  <div class="abs tsl" style="left:241px;top:243.8px"><div class="tbg"></div><div class="tt" style="font-size:48px">目录</div><div class="tbu" style="top:183px"></div><div class="tb" style="top:170px;font-size:32px;letter-spacing:0px;height:34px;line-height:34px">引言：道德实在论与反实在论</div><div class="tbu" style="top:231px"></div><div class="tb" style="top:218px;font-size:32px;letter-spacing:0px;height:34px;line-height:34px">一、反实在论对道德实在论的批评</div><div class="tbu" style="top:279px"></div><div class="tb" style="top:266px;font-size:32px;letter-spacing:0px;height:34px;line-height:34px">二、以人（行动者）为中心的道德实在论</div><div class="tbu" style="top:327px"></div><div class="tb" style="top:314px;font-size:32px;letter-spacing:0px;height:34px;line-height:34px">三、新亚里士多德主义的以人为中心的道德实在论的</div><div class="tb" style="top:348px;font-size:32px;letter-spacing:0px;height:34px;line-height:34px">缺陷</div><div class="tbu" style="top:409px"></div><div class="tb" style="top:396px;font-size:32px;letter-spacing:0px;height:34px;line-height:34px">四、朱熹的以人为中心的道德实在论</div><div class="tbu" style="top:457px"></div><div class="tb" style="top:444px;font-size:32px;letter-spacing:0px;height:34px;line-height:34px">五、朱熹的道德实在论如何回应反实在论的批评</div></div>
  <div class="abs tnum" style="top:337.6px">3</div>
  <div class="abs tfr" style="left:238.6px;top:339.1px;width:138.8px;height:80.4px"></div>
  <div class="abs tsl" style="left:241px;top:340.7px"><div class="tbg"></div><div class="tt" style="font-size:48px">事实命题与道德命题</div><div class="tbu" style="top:191px"></div><div class="tb" style="top:178px;font-size:31px;letter-spacing:0px;height:34px;line-height:34px"><span class="r">事实命题：</span></div><div class="tbu" style="top:242px"></div><div class="tb" style="top:229px;font-size:31px;letter-spacing:0px;height:34px;line-height:34px">张三弄丢了手机。</div><div class="tbu" style="top:293px"></div><div class="tb" style="top:280px;font-size:31px;letter-spacing:0px;height:34px;line-height:34px">王五捡到了手机。</div><div class="tbu" style="top:344px"></div><div class="tb" style="top:331px;font-size:31px;letter-spacing:0px;height:34px;line-height:34px"><span class="r">道德命题：</span></div><div class="tbu" style="top:395px"></div><div class="tb" style="top:382px;font-size:31px;letter-spacing:0px;height:34px;line-height:34px">张三弄丢李四的手机是不对的/张三应该赔偿李四</div><div class="tbu" style="top:446px"></div><div class="tb" style="top:433px;font-size:31px;letter-spacing:0px;height:34px;line-height:34px">王五把捡来的手机还给李四/王五为人诚实值得称赞</div></div>
  <div class="abs tnum" style="top:434.5px">4</div>
  <div class="abs tfr" style="left:238.6px;top:436.0px;width:138.8px;height:80.4px"></div>
  <div class="abs tsl" style="left:241px;top:437.6px"><div class="tbg"></div><div class="tt" style="font-size:48px">道德实在论与反实在论之争</div><div class="tbu" style="top:185px"></div><div class="tb" style="top:175px;font-size:22px;letter-spacing:4.6px;height:28px;line-height:28px">反实在论者承认</div><div class="tbu" style="top:226px"></div><div class="tb" style="top:216px;font-size:22px;letter-spacing:4.6px;height:28px;line-height:28px">（1）道德命题有真假，就它们不同于情感表达而言。</div><div class="tbu" style="top:268px"></div><div class="tb" style="top:258px;font-size:22px;letter-spacing:4.6px;height:28px;line-height:28px">（2）但如果我们关于道德事实的道德信念包括道德性质，</div><div class="tbu" style="top:310px"></div><div class="tb" style="top:300px;font-size:22px;letter-spacing:4.6px;height:28px;line-height:28px">结果实在论者得否认（2）。</div><div class="tbu" style="top:351px"></div><div class="tb" style="top:341px;font-size:22px;letter-spacing:4.6px;height:28px;line-height:28px">他们会否认（1）。</div><div class="tbu" style="top:392px"></div><div class="tb" style="top:382px;font-size:22px;letter-spacing:4.6px;height:28px;line-height:28px">如果（1）成立它们与道德判断相同时，那么最多只是作道德命题</div><div class="tb" style="top:410px;font-size:22px;letter-spacing:4.6px;height:28px;line-height:28px">的真，那么最后与道德判断相关，它们之间的区别最终就无法成。</div><div class="tbu" style="top:462px"></div><div class="tb" style="top:452px;font-size:22px;letter-spacing:4.6px;height:28px;line-height:28px">因此，道德实在论者承认（1）和否定（2）的。</div></div>
  <div class="abs tnum" style="top:531.4px">5</div>
  <div class="abs tfr" style="left:238.6px;top:532.9px;width:138.8px;height:80.4px"></div>
  <div class="abs tsl" style="left:241px;top:534.5px"><div class="tbg"></div><div class="tt" style="font-size:43px">道德反实在论的类型之一：是非认知主义</div><div class="tbu" style="top:179px"></div><div class="tb" style="top:168px;font-size:26px;letter-spacing:0px;height:29.5px;line-height:29.5px">非认知主义（<span class="e">non-cognitivism</span>）认为道德语言所要表达的并不是有</div><div class="tb" style="top:198px;font-size:26px;letter-spacing:0px;height:29.5px;line-height:29.5px">真假的信念，因而也不是命题。</div><div class="tbu" style="top:249px"></div><div class="tb" style="top:238px;font-size:26px;letter-spacing:0px;height:29.5px;line-height:29.5px">与表达三角不是正确命题、对与错是有真值的不同的是「的」或者</div><div class="tb" style="top:268px;font-size:26px;letter-spacing:0px;height:29.5px;line-height:29.5px">有害的和有益的与我们的情感表达，所以这样一种立场通常被叫</div><div class="tb" style="top:297px;font-size:26px;letter-spacing:0px;height:29.5px;line-height:29.5px">做情感主义（<span class="e">emotivism</span>）或表达主义（<span class="e">expressivism</span>）。</div><div class="tbu" style="top:348px"></div><div class="tb" style="top:338px;font-size:26px;letter-spacing:0px;height:29.5px;line-height:29.5px">例如，当我们说某个行为是不对的，我们实际上只是在表达我们不</div><div class="tb" style="top:367px;font-size:26px;letter-spacing:0px;height:29.5px;line-height:29.5px">喜欢这个行为的情感。这样的表达没有真假可言而已是一种态度</div><div class="tb" style="top:396px;font-size:26px;letter-spacing:0px;height:29.5px;line-height:29.5px">表达。在当代哲学中这种立场的代表是艾耶尔（<span class="e">A.J. Ayer</span>）和布莱</div><div class="tb" style="top:426px;font-size:26px;letter-spacing:0px;height:29.5px;line-height:29.5px">克本（<span class="r"><span class="e">Simon Blackburn</span></span>）。</div></div>
  <div class="abs tnum" style="top:628.3px">6</div>
  <div class="abs tfr" style="left:238.6px;top:629.8px;width:138.8px;height:80.4px"></div>
  <div class="abs tsl" style="left:241px;top:631.4px"><div class="tbg"></div><div class="tt" style="font-size:48px">道德反实在论的类型之二：错误理论</div><div class="tbu" style="top:183px"></div><div class="tb" style="top:170px;font-size:28.5px;letter-spacing:0.7px;height:33.5px;line-height:33.5px">另一种反实在论承认道德判断是认知性的，是在试图描述</div><div class="tb" style="top:204px;font-size:28.5px;letter-spacing:0.7px;height:33.5px;line-height:33.5px">某种客观的道德事实。但由于这样的事实根本不存在，这</div><div class="tb" style="top:237px;font-size:28.5px;letter-spacing:0.7px;height:33.5px;line-height:33.5px">样的道德判断都是错误的，也就是说所有肯定的道德判断。</div><div class="tbu" style="top:293px"></div><div class="tb" style="top:280px;font-size:28.5px;letter-spacing:0.7px;height:33.5px;line-height:33.5px">这就有类似于巫女（巫师）的断言：它表现着某种客观的现</div><div class="tb" style="top:314px;font-size:28.5px;letter-spacing:0.7px;height:33.5px;line-height:33.5px">象，但由于这样的断言根本不存在，所有与之相关的断言</div><div class="tb" style="top:348px;font-size:28.5px;letter-spacing:0.7px;height:33.5px;line-height:33.5px">都是错误。</div><div class="tbu" style="top:404px"></div><div class="tb" style="top:391px;font-size:28.5px;letter-spacing:0.7px;height:33.5px;line-height:33.5px">所以这样一种理论也叫道德错误理论（<span class="e">error theory</span>）。</div><div class="tbu" style="top:447px"></div><div class="tb" style="top:434px;font-size:28.5px;letter-spacing:0.7px;height:33.5px;line-height:33.5px">主要代表是（<span class="e">John Mackie</span>）和乔伊斯（<span class="e">Richard Joyce</span>）</div><div class="tb" style="top:468px;font-size:28.5px;letter-spacing:0.7px;height:33.5px;line-height:33.5px">等人。</div></div>
  <div class="abs tnum" style="top:725.2px">7</div>
  <div class="abs tfr" style="left:238.6px;top:726.7px;width:138.8px;height:80.4px"></div>
  <div class="abs tsl" style="left:241px;top:728.3px"><div class="tbg"></div><div class="tt" style="font-size:45px">道德反实在论的类型之三：非客观主义</div><div class="tbu" style="top:171px"></div><div class="tb" style="top:162px;font-size:27px;letter-spacing:0px;height:26px;line-height:26px">道德反实在论的第三种类型认为道德判断有真值，但不承</div><div class="tb" style="top:188px;font-size:27px;letter-spacing:0px;height:26px;line-height:26px">认有客观的道德事实。</div><div class="tbu" style="top:235px"></div><div class="tb" style="top:226px;font-size:27px;letter-spacing:0px;height:26px;line-height:26px">一个道德判断的真假取决于判断者所接受的一套主观标准。</div><div class="tbu" style="top:273px"></div><div class="tb" style="top:264px;font-size:27px;letter-spacing:0px;height:26px;line-height:26px">我们说某人的行动不对与一个观察者偏好这样子来回应他的行动相</div><div class="tb" style="top:290px;font-size:27px;letter-spacing:0px;height:26px;line-height:26px">关。</div><div class="tbu" style="top:337px"></div><div class="tb" style="top:328px;font-size:27px;letter-spacing:0px;height:26px;line-height:26px">我们可以赞成这个偏好的判断的真值，但我们知道你如果去观察</div><div class="tb" style="top:354px;font-size:27px;letter-spacing:0px;height:26px;line-height:26px">他，你即将得到不这样感觉，所以人与观察是真让他们的情况是</div><div class="tb" style="top:380px;font-size:27px;letter-spacing:0px;height:26px;line-height:26px">真的。</div><div class="tbu" style="top:427px"></div><div class="tb" style="top:418px;font-size:27px;letter-spacing:0px;height:26px;line-height:26px">所以这样一种理论通常也就认为是主观主义或者非客观主义。</div><div class="tbu" style="top:465px"></div><div class="tb" style="top:456px;font-size:27px;letter-spacing:0px;height:26px;line-height:26px">当代哲学中持这种非客观主义立场的一位一些，主要代表有</div><div class="tb" style="top:482px;font-size:27px;letter-spacing:0px;height:26px;line-height:26px">哈曼（<span class="e">Gilbert Harman</span>）和科斯嘉（<span class="e">Christine Korsgaard</span>）。</div></div>
  <div class="abs tnum" style="top:822.1px">8</div>
  <div class="abs" style="left:236.4px;top:821.2px;width:144px;height:86px;background:#b64a2c;border-radius:1px"></div>
  <div class="abs" style="left:239.4px;top:824.2px;width:138px;height:80px;background:#fbfaf6"></div>
  <div class="abs tsl" style="left:241px;top:825.2px"><div class="tbg"></div><div class="tt" style="top:72px">实在论的日常分类</div><div class="tbu" style="top:182px"></div><div class="tb" style="top:171px;font-size:22px;letter-spacing:3.2px;height:30px;line-height:30px;font-weight:600"><span class="r">自然主义的道德实在论：</span></div><div class="tbu" style="top:216px"></div><div class="tb" style="top:205px;font-size:22px;letter-spacing:3.2px;height:30px;line-height:30px;font-weight:600">客观存在的道德事实或道德性质好么就是自然事实或自然性质，要么</div><div class="tb" style="top:232px;font-size:22px;letter-spacing:3.2px;height:30px;line-height:30px;font-weight:600">是依附于（<span class="e">supervene</span>）自然事实或自然性质上的事实或性质。</div><div class="tbu" style="top:279px"></div><div class="tb" style="top:268px;font-size:22px;letter-spacing:3.2px;height:30px;line-height:30px;font-weight:600">代表这样一种立场的有博伊德（<span class="e">Richard Boyd</span>）和莱顿（<span class="e">Peter</span></div><div class="tb" style="top:293px;font-size:22px;letter-spacing:3.2px;height:30px;line-height:30px;font-weight:600"><span class="e">Railton</span>）。</div><div class="tbu" style="top:339px"></div><div class="tb" style="top:328px;font-size:22px;letter-spacing:3.2px;height:30px;line-height:30px;font-weight:600"><span class="r">非自然主义的道德实在论：</span></div><div class="tbu" style="top:372px"></div><div class="tb" style="top:361px;font-size:22px;letter-spacing:3.2px;height:30px;line-height:30px;font-weight:600">道德事实、道德性质不是自然事实、自然性质，而是与三角形所具有</div><div class="tb" style="top:385.5px;font-size:22px;letter-spacing:3.2px;height:30px;line-height:30px;font-weight:600">的其内角之和为<span class="e">180</span>度这样的数学性质或者是象柏拉图所讨论的形式</div><div class="tb" style="top:411px;font-size:22px;letter-spacing:3.2px;height:30px;line-height:30px;font-weight:600">所具有的形而上学性质类似的非自然性质。</div><div class="tbu" style="top:460px"></div><div class="tb" style="top:449px;font-size:22px;letter-spacing:3.2px;height:30px;line-height:30px;font-weight:600">这种立场以摩尔（<span class="e">G.E. Moore</span>）和夏佛<span class="e">-</span>兰道（<span class="e">Russ Shafer-Landau</span>）</div><div class="tb" style="top:473px;font-size:22px;letter-spacing:3.2px;height:30px;line-height:30px;font-weight:600">为代表。</div></div>
  <div class="abs tnum" style="top:919.0px">9</div>
  <div class="abs tfr" style="left:238.6px;top:920.5px;width:138.8px;height:80.4px"></div>
  <div class="abs tsl" style="left:241px;top:922.1px"><div class="tbg"></div><div class="tt" style="font-size:48px">实在论的新的分类</div><div class="tbu" style="top:184px"></div><div class="tb" style="top:171px;font-size:29px;letter-spacing:0px;height:33px;line-height:33px">道德实在论也可以分为<span class="r">以道德行动为焦点的</span>的道德实在论</div><div class="tb" style="top:204px;font-size:29px;letter-spacing:0px;height:33px;line-height:33px">和<span class="r">以道德行动者为焦点的</span>的道德实在论。</div><div class="tbu" style="top:258px"></div><div class="tb" style="top:245px;font-size:29px;letter-spacing:0px;height:33px;line-height:33px"><span class="r">以道德行动为焦点的</span>的实在论要求有道德性质都是涉及</div><div class="tb" style="top:278px;font-size:29px;letter-spacing:0px;height:33px;line-height:33px">行动的事实或性质，<span class="r">行动的对与错</span>。</div></div>
  <svg style="left:296.4px;top:847.8px" width="14" height="20" viewBox="0 0 14 20"><path d="M1.5 1.4 V15.6 L4.9 12.5 L7.3 18.1 L9.9 17 L7.5 11.5 H12 Z" fill="#111" stroke="#f4f4f4" stroke-width="1.1" stroke-linejoin="round"/></svg>
  <!--/THUMBS-->
  <!--SLIDE-->
  <div id="slideframe" class="abs">
    <div id="slidebg" class="abs"></div>
  </div>
  <div class="abs" id="stitle" style="left:526.3px;top:343.6px;letter-spacing:.45px;height:70px;line-height:70px;font-size:48px;color:#262522;white-space:nowrap;font-family:'Liberation Serif','Noto Serif CJK SC',serif;font-weight:300">实在论的日常分类</div>
  <div class="abs sl red" id="s1" style="top:438.8px">自然主义的道德实在论：</div>
  <div class="abs sl" id="s2" style="top:473.2px">客观存在的道德事实或道德性质好么就是自然事实或自然性质，要么</div>
  <div class="abs sl" id="s3" style="top:496.3px">是依附于（<span class="en" id="e1" style="letter-spacing:3.03px;">supervene</span>）自然事实或自然性质上的事实或性质。</div>
  <div class="abs sl" id="s4" style="top:529.1px">代表这样一种立场的有博伊德（<span class="en" id="e2" style="letter-spacing:2.7px;">Richard Boyd</span>）和莱顿（<span class="en" id="e3" style="letter-spacing:2.38px;">Peter</span></div>
  <div class="abs sl" id="s5" style="top:553.1px"><span class="en" id="e4" style="letter-spacing:2.43px;text-decoration:underline wavy #d9493c .8px;text-underline-offset:3px">Railton</span>）。</div>
  <div class="abs sl red" id="s6" style="top:587.3px">非自然主义的道德实在论：</div>
  <div class="abs sl" id="s7" style="top:621.4px">道德事实、道德性质不是自然事实、自然性质，而是与三角形所具有</div>
  <div class="abs sl" id="s8" style="top:643.7px">的其内角之和为<span class="en" id="e5" style="letter-spacing:2.3px;">180</span>度这样的数学性质或者是象柏拉图所讨论的形式</div>
  <div class="abs sl" id="s9" style="top:669.1px">所具有的形而上学性质类似的非自然性质。</div>
  <div class="abs sl" id="s10" style="top:702.6px">这种立场以摩尔（<span class="en" id="e6" style="letter-spacing:2.57px;">G.E. Moore</span>）和夏佛<span class="en" style="letter-spacing:.57px">-</span>兰道（<span class="en" id="e7" style="letter-spacing:1.85px;">Russ Shafer-Landau</span>）</div>
  <div class="abs sl" id="s11" style="top:726.2px">为代表。</div>
  <div class="abs bl" style="top:449.5px"></div>
  <div class="abs bl" style="top:483.5px"></div>
  <div class="abs bl" style="top:540.5px"></div>
  <div class="abs bl" style="top:598.5px"></div>
  <div class="abs bl" style="top:632.5px"></div>
  <div class="abs bl" style="top:713.5px"></div>
  <!--/SLIDE-->
  <!--STATUS-->
  <div class="abs" style="left:402px;top:959px;width:1035px;height:5px;background:#f4f4f3;border-top:1px solid #dcdcdb"></div>
  <div id="status" class="abs"></div>
  <div class="abs stx" id="st1" style="left:264.6px;letter-spacing:.62px">8 of 84</div>
  <div class="abs stx" id="st2" style="left:332.6px">English (United States)</div>
  <!-- notes -->
  <svg style="left:878px;top:969px" width="16" height="14" viewBox="0 0 16 14" fill="none" stroke="#7a7a7a" stroke-width="1.3">
    <path d="M.8 6.4 H14.8 M.8 9.4 H14.8 M.8 12.4 H10.4"/><path d="M5 4.2 L7.8 1.4 L10.6 4.2" fill="#7a7a7a" stroke="none"/>
  </svg>
  <div class="abs stx" id="st3" style="left:898.2px">Notes</div>
  <svg style="left:956px;top:969px" width="17" height="15" viewBox="0 0 17 15"><path d="M1.6 1.2 H15 a.8 .8 0 0 1 .8 .8 V9.6 a.8 .8 0 0 1 -.8 .8 H7.6 L4.4 13.6 V10.4 H1.6 a.8 .8 0 0 1 -.8 -.8 V2 a.8 .8 0 0 1 .8 -.8Z" fill="#6c6c6c"/></svg>
  <div class="abs stx" id="st4" style="left:976.6px">Comments</div>
  <!-- view buttons -->
  <div class="abs" style="left:1054.6px;top:965px;width:40.6px;height:22px;background:#9b9b9b"></div>
  <svg style="left:1066px;top:968px" width="18" height="16" viewBox="0 0 18 16">
    <rect x="1" y="1" width="15.8" height="13.6" rx="1" fill="#f6f6f6"/>
    <rect x="5.4" y="3" width="9.4" height="6" fill="#9b9b9b"/><rect x="6.6" y="4.2" width="7" height="3.6" fill="#f6f6f6"/>
    <rect x="2.6" y="3" width="1.4" height="9.6" fill="#bdbdbd"/><rect x="5.4" y="10.4" width="9.4" height="1.4" fill="#9b9b9b"/>
  </svg>
  <svg style="left:1105px;top:970px" width="19" height="14" viewBox="0 0 19 14" fill="#666">
    <rect x=".6" y=".8" width="7.4" height="4.8" rx="1"/><rect x="10.6" y=".8" width="7.4" height="4.8" rx="1"/><rect x=".6" y="7.8" width="7.4" height="4.8" rx="1"/><rect x="10.6" y="7.8" width="7.4" height="4.8" rx="1"/>
  </svg>
  <svg style="left:1145px;top:969px" width="18" height="16" viewBox="0 0 18 16" fill="none" stroke="#6a6a6a" stroke-width="1.4">
    <path d="M.8 1.4 H17.2"/><rect x="2.4" y="1.6" width="13.2" height="8.6"/><path d="M5.4 5.6 H12.6" /><path d="M9 10.4 V13.6 M5.6 14.2 H12.4"/>
  </svg>
  <div class="abs" style="left:1181.6px;top:975.6px;width:9.6px;height:2px;background:#666"></div>
  <div class="abs" style="left:1200px;top:974.6px;width:107px;height:4px;border-radius:2px;background:#8f8f8f"></div>
  <div class="abs" style="left:1243.2px;top:970.4px;width:12.4px;height:12.4px;border-radius:50%;background:#fdfdfd;box-shadow:0 0 1.5px rgba(0,0,0,.45)"></div>
  <div class="abs" style="left:1316px;top:975.6px;width:9.6px;height:2px;background:#666"></div>
  <div class="abs" style="left:1319.8px;top:971.8px;width:2px;height:9.6px;background:#666"></div>
  <div class="abs stx" id="st5" style="left:1343.8px;letter-spacing:.9px">93%</div>
  <svg style="left:1394px;top:968px" width="17" height="17" viewBox="0 0 17 17" fill="none" stroke="#6a6a6a">
    <rect x="1.2" y="1.4" width="14.4" height="14.2" stroke-width="1.3"/>
    <path d="M8.4 2 V6 M8.4 11 V15 M2 8.5 H6 M11 8.5 H15" stroke-width="1"/>
    <path d="M6.8 4.6 L8.4 6.6 L10 4.6 Z M6.8 12.4 L8.4 10.4 L10 12.4 Z M4.6 6.9 L6.6 8.5 L4.6 10.1 Z M12.4 6.9 L10.4 8.5 L12.4 10.1 Z" fill="#6a6a6a" stroke="none"/>
  </svg>
  <!--/STATUS-->
</div>
</div>
<div id="ovw" class="abs" style="left:0;top:0;width:1920px;height:987px;will-change:transform">
<!--OVERLAYS-->
<!-- left toolbar toggle -->
<div class="abs" style="left:3px;top:797px;width:45px;height:36px;background:#2b2c2f;border-radius:0 4px 4px 0"></div>
<svg style="left:14px;top:805px" width="24" height="20" viewBox="0 0 24 20" fill="#d2d2d2">
  <rect x="6" y="2.6" width="15.4" height="2.2" rx="1"/><rect x="9.6" y="9.9" width="11.8" height="2.2" rx="1"/><rect x="6" y="17.2" width="15.4" height="2.2" rx="1"/>
  <circle cx="2.6" cy="3.7" r="1.1"/><circle cx="6.2" cy="11" r="1.1"/><circle cx="2.6" cy="18.3" r="1.1"/>
</svg>
<!-- share label -->
<div class="abs" style="left:3px;top:959px;width:259.5px;height:28px;background:rgba(10,10,10,.82)"></div>
<svg style="left:3px;top:963px" width="22" height="22" viewBox="0 0 22 22">
  <rect x="1" y="2.4" width="18" height="13.2" rx="2" fill="#f2f2f2"/>
  <rect x="5" y="17" width="10" height="2.4" rx="1.2" fill="#f2f2f2"/>
  <path d="M5.2 12.6 C5.6 8.8 8 7.4 10.8 7.4 V5 L15.4 8.6 L10.8 12.2 V9.8 C8.6 9.8 6.8 10.4 5.2 12.6Z" fill="#222"/>
</svg>
<svg style="left:25px;top:963px" width="18" height="21" viewBox="0 0 18 21">
  <path d="M2 9.4 C2 17 14.6 17 14.6 9.4" fill="none" stroke="#f2f2f2" stroke-width="1.9"/>
  <path d="M8.3 15 V19" stroke="#f2f2f2" stroke-width="2"/>
  <rect x="4.6" y="1.4" width="7.4" height="12.8" rx="3.7" fill="#55d655"/>
  <rect x="4.6" y="1.4" width="7.4" height="5" rx="3.4" fill="#8be88b" opacity=".7"/>
</svg>
<div class="abs" id="ovl" style="left:45px;top:961.5px;height:26px;line-height:26px;font-size:20.4px;letter-spacing:.35px;color:#fff;white-space:nowrap">HuangYong<span style="font-size:20.2px;letter-spacing:0">的屏幕共享</span></div>
<div class="abs" style="left:1645.8px;top:419.5px;width:263.4px;height:149.5px;border:2px solid #27a55b;border-radius:5px;background:#050505"></div>
<svg style="left:1650.8px;top:423.3px" width="252.6" height="142.4" viewBox="0 0 252.6 142.4">
<defs><linearGradient id="sky" x1="0" y1="0" x2="0.25" y2="1"><stop offset="0" stop-color="#3f86da"/><stop offset=".45" stop-color="#6fa9e3"/><stop offset=".8" stop-color="#a9cfec"/><stop offset="1" stop-color="#c2deef"/></linearGradient>
<linearGradient id="sea" x1="0" y1="0" x2="0" y2="1"><stop offset="0" stop-color="#a6cde0"/><stop offset="1" stop-color="#7fb2cf"/></linearGradient>
<filter id="b1" x="-10%" y="-10%" width="120%" height="120%"><feGaussianBlur stdDeviation="1.1"/></filter><filter id="b2" x="-10%" y="-10%" width="120%" height="120%"><feGaussianBlur stdDeviation="2.2"/></filter><filter id="b3" x="-5%" y="-5%" width="110%" height="110%"><feGaussianBlur stdDeviation=".55"/></filter>
<clipPath id="vc"><rect width="252.6" height="142.4"/></clipPath></defs>
<g clip-path="url(#vc)">
<rect width="252.6" height="142.4" fill="url(#sky)"/>
<g filter="url(#b2)" fill="#f4f8fc">
<polygon points="75.6,-1.3 117.1,-1.3 118.0,12.0 106.3,22.8 97.2,38.6 88.9,46.9 69.0,44.4 49.9,32.2 62.3,25.6 79.8,13.6"/>
<circle cx="14.1" cy="52.7" r="11.6"/>
<circle cx="28.2" cy="49.4" r="9.1"/>
<circle cx="44.0" cy="60.2" r="13.3"/>
<circle cx="64.0" cy="64.3" r="15.0"/>
<circle cx="82.3" cy="60.2" r="11.6"/>
<circle cx="5.8" cy="65.1" r="10.0"/>
<circle cx="162.0" cy="66.8" r="10.0"/>
<circle cx="165.3" cy="81.8" r="6.6"/>
<rect x="0.0" y="61.8" width="89.7" height="16.6"/>
</g>
<g filter="url(#b2)" fill="#c9dcee" opacity=".8"><ellipse cx="44.0" cy="75.1" rx="41.5" ry="3.7"/><ellipse cx="82.3" cy="36.9" rx="10.0" ry="5.0"/></g>
<g filter="url(#b1)">
<polygon fill="#6d8da8" points="-0.8,77.1 9.1,76.4 22.4,79.3 39.0,80.1 59.0,79.4 82.3,80.4 92.2,81.4 92.2,88.4 -0.8,88.4"/>
<polygon fill="#8aa6bb" points="152.0,82.6 165.3,81.8 185.3,84.2 185.3,88.4 152.0,88.4"/>
<rect x="-0.8" y="85.9" width="187.8" height="23.3" fill="url(#sea)"/>
<ellipse cx="32.7" cy="88.4" rx="17.4" ry="2.7" fill="#4e6d80"/>
<ellipse cx="47.7" cy="94.7" rx="7.0" ry="1.5" fill="#3f5e62"/>
<polygon fill="#d3dfe8" points="-0.8,107.0 39.0,105.0 65.6,103.0 95.5,101.0 95.5,116.7 -0.8,116.7"/>
</g>
<g filter="url(#b3)">
<polygon fill="#7f9c8c" points="157.0,-1.3 255.1,-1.3 255.1,98.4 185.3,98.4 175.3,81.8 170.3,61.8 158.7,43.5 148.7,28.6 153.7,13.6"/>
<ellipse cx="195.9" cy="53.6" rx="3.6" ry="2.0" fill="#33482a" opacity=".9"/>
<ellipse cx="233.9" cy="45.3" rx="2.3" ry="1.8" fill="#66523f" opacity=".9"/>
<ellipse cx="234.5" cy="66.7" rx="3.1" ry="3.2" fill="#33482a" opacity=".9"/>
<ellipse cx="164.1" cy="0.1" rx="3.0" ry="3.7" fill="#b5d0e4" opacity=".9"/>
<ellipse cx="182.3" cy="56.6" rx="2.7" ry="3.4" fill="#3f5632" opacity=".9"/>
<ellipse cx="196.5" cy="25.9" rx="2.3" ry="2.1" fill="#4d663c" opacity=".9"/>
<ellipse cx="178.3" cy="5.6" rx="2.2" ry="1.7" fill="#48603a" opacity=".9"/>
<ellipse cx="152.7" cy="35.5" rx="2.0" ry="3.4" fill="#9fc0dc" opacity=".9"/>
<ellipse cx="183.4" cy="29.2" rx="1.8" ry="2.2" fill="#48603a" opacity=".9"/>
<ellipse cx="158.0" cy="4.5" rx="2.0" ry="2.9" fill="#6a8552" opacity=".9"/>
<ellipse cx="253.5" cy="74.1" rx="2.5" ry="2.1" fill="#66523f" opacity=".9"/>
<ellipse cx="233.8" cy="28.5" rx="4.0" ry="3.2" fill="#66523f" opacity=".9"/>
<ellipse cx="209.4" cy="2.8" rx="3.4" ry="2.4" fill="#33482a" opacity=".9"/>
<ellipse cx="179.1" cy="5.9" rx="2.4" ry="2.8" fill="#c9dcea" opacity=".9"/>
<ellipse cx="250.7" cy="46.1" rx="3.1" ry="2.4" fill="#6a8552" opacity=".9"/>
<ellipse cx="171.7" cy="58.5" rx="3.8" ry="2.1" fill="#6a8552" opacity=".9"/>
<ellipse cx="249.7" cy="85.2" rx="1.8" ry="2.9" fill="#4a3f33" opacity=".9"/>
<ellipse cx="174.6" cy="71.2" rx="3.0" ry="2.3" fill="#48603a" opacity=".9"/>
<ellipse cx="154.5" cy="21.1" rx="3.8" ry="2.1" fill="#4d663c" opacity=".9"/>
<ellipse cx="195.2" cy="4.6" rx="3.9" ry="1.8" fill="#7b9560" opacity=".9"/>
<ellipse cx="162.0" cy="42.8" rx="3.8" ry="2.8" fill="#6a8552" opacity=".9"/>
<ellipse cx="185.7" cy="29.2" rx="3.3" ry="2.4" fill="#4d663c" opacity=".9"/>
<ellipse cx="255.0" cy="6.0" rx="3.3" ry="1.9" fill="#514434" opacity=".9"/>
<ellipse cx="251.1" cy="32.2" rx="3.7" ry="2.7" fill="#4a3f33" opacity=".9"/>
<ellipse cx="232.4" cy="83.3" rx="2.4" ry="1.5" fill="#66523f" opacity=".9"/>
<ellipse cx="154.9" cy="7.6" rx="3.3" ry="2.6" fill="#56703f" opacity=".9"/>
<ellipse cx="226.4" cy="55.6" rx="2.8" ry="2.9" fill="#4d663c" opacity=".9"/>
<ellipse cx="180.6" cy="7.3" rx="3.0" ry="4.1" fill="#4d663c" opacity=".9"/>
<ellipse cx="174.7" cy="-0.2" rx="3.4" ry="2.5" fill="#3f5632" opacity=".9"/>
<ellipse cx="247.5" cy="47.5" rx="2.0" ry="2.7" fill="#3a3028" opacity=".9"/>
<ellipse cx="234.1" cy="88.3" rx="3.8" ry="2.1" fill="#2e2822" opacity=".9"/>
<ellipse cx="161.6" cy="33.1" rx="3.9" ry="2.3" fill="#5c7648" opacity=".9"/>
<ellipse cx="165.3" cy="42.9" rx="2.4" ry="3.0" fill="#3f5632" opacity=".9"/>
<ellipse cx="219.7" cy="68.9" rx="3.6" ry="2.3" fill="#33482a" opacity=".9"/>
<ellipse cx="212.7" cy="65.2" rx="3.5" ry="1.5" fill="#7b9560" opacity=".9"/>
<ellipse cx="161.7" cy="43.3" rx="1.8" ry="1.6" fill="#56703f" opacity=".9"/>
<ellipse cx="215.0" cy="42.4" rx="3.2" ry="2.1" fill="#7b9560" opacity=".9"/>
<ellipse cx="198.4" cy="16.2" rx="1.6" ry="2.1" fill="#33482a" opacity=".9"/>
<ellipse cx="231.2" cy="51.6" rx="2.5" ry="3.7" fill="#5a4a3a" opacity=".9"/>
<ellipse cx="244.9" cy="7.2" rx="2.6" ry="2.1" fill="#5a4a3a" opacity=".9"/>
<ellipse cx="242.9" cy="-0.7" rx="3.5" ry="4.2" fill="#2e2822" opacity=".9"/>
<ellipse cx="197.1" cy="62.5" rx="3.7" ry="4.3" fill="#4d663c" opacity=".9"/>
<ellipse cx="252.6" cy="51.3" rx="3.6" ry="2.5" fill="#514434" opacity=".9"/>
<ellipse cx="156.0" cy="41.9" rx="1.6" ry="3.8" fill="#56703f" opacity=".9"/>
<ellipse cx="165.7" cy="31.5" rx="4.0" ry="4.0" fill="#6a8552" opacity=".9"/>
<ellipse cx="203.0" cy="65.1" rx="3.2" ry="3.6" fill="#33482a" opacity=".9"/>
<ellipse cx="194.5" cy="53.5" rx="3.6" ry="3.1" fill="#6a8552" opacity=".9"/>
<ellipse cx="180.7" cy="36.0" rx="1.8" ry="3.0" fill="#3f5632" opacity=".9"/>
<ellipse cx="176.5" cy="47.5" rx="3.0" ry="1.6" fill="#4d663c" opacity=".9"/>
<ellipse cx="251.8" cy="49.3" rx="2.7" ry="3.4" fill="#4d663c" opacity=".9"/>
<ellipse cx="191.8" cy="92.5" rx="2.7" ry="2.5" fill="#56703f" opacity=".9"/>
<ellipse cx="244.4" cy="90.4" rx="2.0" ry="3.2" fill="#4a3f33" opacity=".9"/>
<ellipse cx="247.0" cy="11.4" rx="1.9" ry="1.5" fill="#5a4a3a" opacity=".9"/>
<ellipse cx="177.7" cy="69.6" rx="3.3" ry="1.8" fill="#33482a" opacity=".9"/>
<ellipse cx="202.2" cy="23.2" rx="2.5" ry="3.0" fill="#9fc0dc" opacity=".9"/>
<ellipse cx="164.3" cy="18.7" rx="3.6" ry="3.2" fill="#3f5632" opacity=".9"/>
<ellipse cx="239.6" cy="21.5" rx="2.3" ry="2.4" fill="#6a8552" opacity=".9"/>
<ellipse cx="246.7" cy="20.1" rx="3.7" ry="1.9" fill="#6a8552" opacity=".9"/>
<ellipse cx="156.6" cy="36.7" rx="3.3" ry="2.1" fill="#48603a" opacity=".9"/>
<ellipse cx="214.9" cy="77.0" rx="3.9" ry="1.8" fill="#7b9560" opacity=".9"/>
<ellipse cx="201.7" cy="73.0" rx="2.7" ry="1.6" fill="#3f5632" opacity=".9"/>
<ellipse cx="229.4" cy="58.8" rx="2.0" ry="2.1" fill="#5a4a3a" opacity=".9"/>
<ellipse cx="237.8" cy="95.8" rx="1.8" ry="3.4" fill="#4a3f33" opacity=".9"/>
<ellipse cx="155.4" cy="8.2" rx="2.6" ry="3.2" fill="#48603a" opacity=".9"/>
<ellipse cx="238.2" cy="16.4" rx="3.8" ry="3.2" fill="#66523f" opacity=".9"/>
<ellipse cx="182.0" cy="7.0" rx="2.0" ry="3.1" fill="#48603a" opacity=".9"/>
<ellipse cx="183.9" cy="73.4" rx="3.4" ry="3.8" fill="#4d663c" opacity=".9"/>
<ellipse cx="190.9" cy="86.6" rx="3.4" ry="2.6" fill="#7b9560" opacity=".9"/>
<ellipse cx="225.1" cy="5.6" rx="3.7" ry="4.3" fill="#4a3f33" opacity=".9"/>
<ellipse cx="244.6" cy="3.5" rx="2.3" ry="3.4" fill="#56703f" opacity=".9"/>
<ellipse cx="208.6" cy="50.9" rx="3.2" ry="3.6" fill="#33482a" opacity=".9"/>
<ellipse cx="252.9" cy="0.9" rx="2.6" ry="2.9" fill="#3a3028" opacity=".9"/>
<ellipse cx="229.3" cy="62.2" rx="3.8" ry="3.0" fill="#3a3028" opacity=".9"/>
<ellipse cx="201.9" cy="93.5" rx="3.5" ry="1.7" fill="#4d663c" opacity=".9"/>
<ellipse cx="211.6" cy="73.1" rx="3.9" ry="3.9" fill="#6a8552" opacity=".9"/>
<ellipse cx="205.6" cy="57.2" rx="2.8" ry="3.2" fill="#33482a" opacity=".9"/>
<ellipse cx="186.5" cy="26.7" rx="3.4" ry="1.6" fill="#56703f" opacity=".9"/>
<ellipse cx="230.5" cy="56.1" rx="2.5" ry="4.0" fill="#514434" opacity=".9"/>
<ellipse cx="227.9" cy="3.6" rx="2.6" ry="2.8" fill="#b5d0e4" opacity=".9"/>
<ellipse cx="252.2" cy="22.6" rx="1.9" ry="4.2" fill="#33482a" opacity=".9"/>
<ellipse cx="173.5" cy="67.9" rx="2.0" ry="1.6" fill="#48603a" opacity=".9"/>
<ellipse cx="204.1" cy="10.9" rx="2.1" ry="3.1" fill="#48603a" opacity=".9"/>
<ellipse cx="192.4" cy="74.9" rx="3.3" ry="2.2" fill="#6a8552" opacity=".9"/>
<ellipse cx="231.8" cy="59.9" rx="3.3" ry="3.5" fill="#514434" opacity=".9"/>
<ellipse cx="167.6" cy="26.0" rx="3.1" ry="2.0" fill="#3f5632" opacity=".9"/>
<ellipse cx="220.8" cy="60.3" rx="3.0" ry="1.8" fill="#4a3f33" opacity=".9"/>
<ellipse cx="205.6" cy="5.8" rx="3.1" ry="2.5" fill="#6a8552" opacity=".9"/>
<ellipse cx="198.7" cy="19.3" rx="1.7" ry="1.8" fill="#6a8552" opacity=".9"/>
<ellipse cx="234.5" cy="59.8" rx="3.4" ry="2.6" fill="#66523f" opacity=".9"/>
<ellipse cx="163.3" cy="13.7" rx="3.4" ry="3.8" fill="#7b9560" opacity=".9"/>
<ellipse cx="166.9" cy="62.8" rx="1.7" ry="1.7" fill="#33482a" opacity=".9"/>
<ellipse cx="208.0" cy="46.2" rx="1.5" ry="2.4" fill="#56703f" opacity=".9"/>
<ellipse cx="245.4" cy="57.9" rx="2.3" ry="4.0" fill="#514434" opacity=".9"/>
<ellipse cx="170.7" cy="63.1" rx="2.6" ry="3.2" fill="#4d663c" opacity=".9"/>
<ellipse cx="244.5" cy="66.0" rx="2.6" ry="2.1" fill="#3a3028" opacity=".9"/>
<ellipse cx="251.6" cy="70.2" rx="1.6" ry="3.4" fill="#3a3028" opacity=".9"/>
<ellipse cx="210.2" cy="76.7" rx="2.8" ry="3.9" fill="#7b9560" opacity=".9"/>
<ellipse cx="207.8" cy="16.0" rx="2.0" ry="1.7" fill="#56703f" opacity=".9"/>
<ellipse cx="164.2" cy="27.7" rx="2.3" ry="3.0" fill="#9fc0dc" opacity=".9"/>
<ellipse cx="183.2" cy="25.5" rx="3.1" ry="1.8" fill="#9fc0dc" opacity=".9"/>
<ellipse cx="235.2" cy="40.0" rx="2.3" ry="2.8" fill="#2e2822" opacity=".9"/>
<ellipse cx="184.9" cy="77.8" rx="2.8" ry="3.5" fill="#6a8552" opacity=".9"/>
<ellipse cx="223.5" cy="88.4" rx="3.6" ry="3.8" fill="#7b9560" opacity=".9"/>
<ellipse cx="237.1" cy="85.8" rx="2.4" ry="1.5" fill="#2e2822" opacity=".9"/>
<ellipse cx="245.9" cy="22.8" rx="1.9" ry="2.1" fill="#514434" opacity=".9"/>
<ellipse cx="193.0" cy="27.3" rx="3.3" ry="2.4" fill="#5c7648" opacity=".9"/>
<ellipse cx="245.6" cy="72.5" rx="2.3" ry="2.1" fill="#4a3f33" opacity=".9"/>
<ellipse cx="185.9" cy="56.4" rx="2.1" ry="2.0" fill="#33482a" opacity=".9"/>
<ellipse cx="177.4" cy="15.6" rx="3.8" ry="3.1" fill="#56703f" opacity=".9"/>
<ellipse cx="239.2" cy="46.2" rx="2.7" ry="2.1" fill="#4d663c" opacity=".9"/>
<ellipse cx="233.6" cy="36.4" rx="3.5" ry="1.7" fill="#3a3028" opacity=".9"/>
<ellipse cx="246.9" cy="86.1" rx="3.5" ry="3.5" fill="#33482a" opacity=".9"/>
<ellipse cx="212.5" cy="14.1" rx="3.8" ry="3.8" fill="#7b9560" opacity=".9"/>
<ellipse cx="214.0" cy="49.3" rx="3.5" ry="1.7" fill="#b5d0e4" opacity=".9"/>
<ellipse cx="176.2" cy="68.9" rx="1.7" ry="3.6" fill="#33482a" opacity=".9"/>
<ellipse cx="205.8" cy="48.3" rx="3.8" ry="1.8" fill="#3f5632" opacity=".9"/>
<ellipse cx="236.3" cy="19.1" rx="3.9" ry="4.2" fill="#5a4a3a" opacity=".9"/>
<ellipse cx="181.2" cy="38.4" rx="1.7" ry="1.7" fill="#33482a" opacity=".9"/>
<ellipse cx="220.1" cy="71.9" rx="1.5" ry="2.6" fill="#4d663c" opacity=".9"/>
<ellipse cx="223.7" cy="22.0" rx="3.6" ry="3.9" fill="#4a3f33" opacity=".9"/>
<ellipse cx="224.7" cy="87.1" rx="3.4" ry="4.2" fill="#2e2822" opacity=".9"/>
<ellipse cx="228.6" cy="53.1" rx="3.3" ry="2.4" fill="#66523f" opacity=".9"/>
<ellipse cx="249.1" cy="53.8" rx="1.7" ry="1.9" fill="#66523f" opacity=".9"/>
<ellipse cx="223.6" cy="16.3" rx="1.7" ry="1.6" fill="#4d663c" opacity=".9"/>
<ellipse cx="253.7" cy="41.2" rx="3.8" ry="1.9" fill="#66523f" opacity=".9"/>
<ellipse cx="169.2" cy="13.2" rx="2.5" ry="1.5" fill="#33482a" opacity=".9"/>
<ellipse cx="190.3" cy="67.3" rx="3.0" ry="1.5" fill="#3f5632" opacity=".9"/>
<ellipse cx="182.8" cy="32.2" rx="2.0" ry="2.4" fill="#4d663c" opacity=".9"/>
<ellipse cx="178.8" cy="8.7" rx="3.7" ry="3.0" fill="#56703f" opacity=".9"/>
<ellipse cx="185.1" cy="47.7" rx="2.8" ry="3.5" fill="#3f5632" opacity=".9"/>
<ellipse cx="237.3" cy="18.0" rx="3.4" ry="1.9" fill="#5a4a3a" opacity=".9"/>
<ellipse cx="198.7" cy="39.6" rx="2.4" ry="2.8" fill="#4d663c" opacity=".9"/>
<ellipse cx="205.8" cy="53.6" rx="3.4" ry="4.0" fill="#56703f" opacity=".9"/>
<ellipse cx="183.2" cy="12.9" rx="3.7" ry="2.2" fill="#5c7648" opacity=".9"/>
<ellipse cx="209.0" cy="80.1" rx="2.5" ry="3.7" fill="#4d663c" opacity=".9"/>
<ellipse cx="247.5" cy="96.6" rx="3.0" ry="3.3" fill="#48603a" opacity=".9"/>
<ellipse cx="229.5" cy="14.2" rx="2.5" ry="3.1" fill="#2e2822" opacity=".9"/>
<ellipse cx="165.8" cy="49.6" rx="3.3" ry="3.7" fill="#b5d0e4" opacity=".9"/>
<ellipse cx="190.6" cy="47.5" rx="3.1" ry="3.4" fill="#7b9560" opacity=".9"/>
<ellipse cx="228.9" cy="72.4" rx="3.6" ry="1.8" fill="#48603a" opacity=".9"/>
<ellipse cx="182.7" cy="49.7" rx="1.6" ry="3.5" fill="#5c7648" opacity=".9"/>
<ellipse cx="244.3" cy="70.4" rx="3.7" ry="4.0" fill="#56703f" opacity=".9"/>
<ellipse cx="252.1" cy="45.3" rx="3.1" ry="4.2" fill="#56703f" opacity=".9"/>
<ellipse cx="242.1" cy="96.6" rx="3.7" ry="2.7" fill="#7b9560" opacity=".9"/>
<ellipse cx="234.0" cy="20.4" rx="1.7" ry="3.7" fill="#4a3f33" opacity=".9"/>
<ellipse cx="160.4" cy="51.4" rx="3.3" ry="1.6" fill="#5c7648" opacity=".9"/>
<ellipse cx="165.6" cy="41.9" rx="3.2" ry="2.1" fill="#48603a" opacity=".9"/>
<ellipse cx="180.1" cy="43.3" rx="3.8" ry="4.3" fill="#7b9560" opacity=".9"/>
<ellipse cx="198.1" cy="18.9" rx="3.6" ry="2.5" fill="#5c7648" opacity=".9"/>
<ellipse cx="198.1" cy="15.5" rx="2.1" ry="4.2" fill="#3f5632" opacity=".9"/>
<ellipse cx="252.5" cy="62.4" rx="3.7" ry="3.5" fill="#56703f" opacity=".9"/>
<ellipse cx="248.4" cy="42.3" rx="1.8" ry="3.4" fill="#3a3028" opacity=".9"/>
<ellipse cx="176.1" cy="69.3" rx="2.4" ry="3.4" fill="#56703f" opacity=".9"/>
<ellipse cx="242.6" cy="56.5" rx="3.2" ry="2.3" fill="#5a4a3a" opacity=".9"/>
<ellipse cx="216.2" cy="7.5" rx="1.7" ry="4.1" fill="#33482a" opacity=".9"/>
<ellipse cx="205.1" cy="40.2" rx="3.4" ry="2.2" fill="#6a8552" opacity=".9"/>
<ellipse cx="177.2" cy="52.4" rx="1.6" ry="2.8" fill="#6a8552" opacity=".9"/>
<ellipse cx="228.1" cy="36.4" rx="1.7" ry="3.7" fill="#5a4a3a" opacity=".9"/>
<ellipse cx="245.3" cy="30.1" rx="2.8" ry="3.9" fill="#3a3028" opacity=".9"/>
<ellipse cx="221.0" cy="49.7" rx="3.4" ry="1.8" fill="#6a8552" opacity=".9"/>
<ellipse cx="194.1" cy="64.2" rx="3.5" ry="2.2" fill="#56703f" opacity=".9"/>
<ellipse cx="199.9" cy="20.4" rx="2.0" ry="4.2" fill="#33482a" opacity=".9"/>
<ellipse cx="242.2" cy="30.5" rx="2.8" ry="3.5" fill="#66523f" opacity=".9"/>
<ellipse cx="239.6" cy="1.7" rx="2.8" ry="3.7" fill="#514434" opacity=".9"/>
<ellipse cx="172.8" cy="13.0" rx="3.5" ry="3.6" fill="#5c7648" opacity=".9"/>
<ellipse cx="231.4" cy="73.7" rx="1.9" ry="2.2" fill="#2e2822" opacity=".9"/>
<ellipse cx="236.8" cy="75.8" rx="3.2" ry="3.5" fill="#3a3028" opacity=".9"/>
<ellipse cx="250.4" cy="11.3" rx="1.9" ry="2.8" fill="#5a4a3a" opacity=".9"/>
<ellipse cx="227.5" cy="2.5" rx="1.7" ry="3.1" fill="#6a8552" opacity=".9"/>
<ellipse cx="198.0" cy="90.4" rx="1.8" ry="3.9" fill="#3f5632" opacity=".9"/>
<ellipse cx="192.2" cy="7.1" rx="3.9" ry="3.2" fill="#56703f" opacity=".9"/>
<ellipse cx="217.2" cy="4.4" rx="2.5" ry="3.9" fill="#6a8552" opacity=".9"/>
<ellipse cx="188.2" cy="75.3" rx="3.5" ry="3.8" fill="#7b9560" opacity=".9"/>
<ellipse cx="198.9" cy="37.9" rx="2.7" ry="3.3" fill="#56703f" opacity=".9"/>
<ellipse cx="166.7" cy="46.4" rx="2.2" ry="4.2" fill="#9fc0dc" opacity=".9"/>
<ellipse cx="214.1" cy="49.5" rx="3.1" ry="2.1" fill="#48603a" opacity=".9"/>
<ellipse cx="158.2" cy="4.3" rx="2.1" ry="3.9" fill="#7b9560" opacity=".9"/>
<ellipse cx="237.7" cy="42.8" rx="3.4" ry="3.0" fill="#3a3028" opacity=".9"/>
<ellipse cx="172.8" cy="2.7" rx="2.5" ry="2.8" fill="#c9dcea" opacity=".9"/>
<ellipse cx="222.0" cy="49.4" rx="3.2" ry="1.9" fill="#7b9560" opacity=".9"/>
<ellipse cx="169.2" cy="26.2" rx="2.8" ry="2.5" fill="#48603a" opacity=".9"/>
<ellipse cx="158.1" cy="35.0" rx="3.4" ry="2.9" fill="#b5d0e4" opacity=".9"/>
<ellipse cx="227.3" cy="63.4" rx="3.2" ry="4.2" fill="#7b9560" opacity=".9"/>
<ellipse cx="240.9" cy="21.7" rx="1.8" ry="2.9" fill="#66523f" opacity=".9"/>
<ellipse cx="200.0" cy="89.9" rx="3.8" ry="2.1" fill="#56703f" opacity=".9"/>
<ellipse cx="230.0" cy="33.1" rx="2.3" ry="2.7" fill="#514434" opacity=".9"/>
<ellipse cx="163.3" cy="55.8" rx="1.6" ry="2.6" fill="#56703f" opacity=".9"/>
<ellipse cx="186.4" cy="4.8" rx="3.6" ry="2.3" fill="#5c7648" opacity=".9"/>
<ellipse cx="224.7" cy="85.5" rx="3.7" ry="3.1" fill="#3a3028" opacity=".9"/>
<ellipse cx="175.3" cy="64.2" rx="2.3" ry="4.0" fill="#33482a" opacity=".9"/>
<ellipse cx="170.4" cy="6.1" rx="1.7" ry="1.7" fill="#48603a" opacity=".9"/>
<ellipse cx="197.2" cy="42.7" rx="3.2" ry="2.3" fill="#b5d0e4" opacity=".9"/>
<ellipse cx="200.5" cy="45.0" rx="2.1" ry="2.1" fill="#3f5632" opacity=".9"/>
<ellipse cx="203.3" cy="89.5" rx="2.7" ry="3.3" fill="#5c7648" opacity=".9"/>
<ellipse cx="206.3" cy="59.9" rx="1.8" ry="1.6" fill="#7b9560" opacity=".9"/>
<ellipse cx="234.1" cy="19.1" rx="3.6" ry="1.9" fill="#5a4a3a" opacity=".9"/>
<ellipse cx="214.2" cy="46.8" rx="2.4" ry="3.4" fill="#7b9560" opacity=".9"/>
<ellipse cx="200.9" cy="62.0" rx="3.3" ry="4.0" fill="#6a8552" opacity=".9"/>
<ellipse cx="253.9" cy="78.9" rx="2.8" ry="3.4" fill="#66523f" opacity=".9"/>
<ellipse cx="191.6" cy="45.9" rx="3.5" ry="2.6" fill="#48603a" opacity=".9"/>
<ellipse cx="224.4" cy="23.4" rx="3.6" ry="2.1" fill="#7b9560" opacity=".9"/>
<ellipse cx="207.9" cy="11.4" rx="3.6" ry="3.8" fill="#6a8552" opacity=".9"/>
<ellipse cx="160.6" cy="35.6" rx="3.9" ry="2.8" fill="#3f5632" opacity=".9"/>
<ellipse cx="222.0" cy="76.2" rx="2.5" ry="3.3" fill="#56703f" opacity=".9"/>
<ellipse cx="189.9" cy="90.2" rx="4.0" ry="4.0" fill="#5c7648" opacity=".9"/>
<ellipse cx="168.0" cy="33.6" rx="3.8" ry="3.8" fill="#4d663c" opacity=".9"/>
<ellipse cx="239.5" cy="15.5" rx="2.2" ry="2.6" fill="#514434" opacity=".9"/>
<ellipse cx="213.8" cy="73.7" rx="2.0" ry="2.3" fill="#48603a" opacity=".9"/>
<ellipse cx="240.7" cy="42.0" rx="3.7" ry="2.7" fill="#3a3028" opacity=".9"/>
<ellipse cx="176.2" cy="54.4" rx="2.1" ry="2.9" fill="#48603a" opacity=".9"/>
<ellipse cx="186.6" cy="24.1" rx="3.2" ry="1.5" fill="#c9dcea" opacity=".9"/>
<ellipse cx="183.4" cy="12.4" rx="2.5" ry="3.8" fill="#48603a" opacity=".9"/>
<ellipse cx="189.8" cy="4.3" rx="3.8" ry="3.9" fill="#56703f" opacity=".9"/>
<ellipse cx="254.5" cy="42.1" rx="3.6" ry="4.2" fill="#5a4a3a" opacity=".9"/>
<ellipse cx="205.3" cy="64.8" rx="2.3" ry="2.9" fill="#5c7648" opacity=".9"/>
<ellipse cx="250.7" cy="-0.2" rx="2.5" ry="3.8" fill="#33482a" opacity=".9"/>
<ellipse cx="236.5" cy="73.9" rx="2.5" ry="3.5" fill="#66523f" opacity=".9"/>
<ellipse cx="171.6" cy="36.7" rx="2.4" ry="3.3" fill="#56703f" opacity=".9"/>
<ellipse cx="185.3" cy="26.0" rx="2.2" ry="2.1" fill="#7b9560" opacity=".9"/>
<ellipse cx="166.5" cy="3.3" rx="1.9" ry="1.8" fill="#56703f" opacity=".9"/>
<ellipse cx="162.5" cy="33.0" rx="1.6" ry="1.8" fill="#5c7648" opacity=".9"/>
<ellipse cx="249.7" cy="81.0" rx="2.3" ry="3.6" fill="#5a4a3a" opacity=".9"/>
<ellipse cx="193.5" cy="93.0" rx="3.7" ry="3.8" fill="#48603a" opacity=".9"/>
<ellipse cx="154.6" cy="36.9" rx="2.8" ry="1.5" fill="#6a8552" opacity=".9"/>
<ellipse cx="225.9" cy="63.6" rx="3.0" ry="4.0" fill="#5c7648" opacity=".9"/>
<ellipse cx="239.6" cy="60.3" rx="1.8" ry="3.6" fill="#4a3f33" opacity=".9"/>
<ellipse cx="227.4" cy="41.4" rx="2.4" ry="3.0" fill="#3f5632" opacity=".9"/>
<ellipse cx="204.1" cy="43.0" rx="3.8" ry="1.9" fill="#5c7648" opacity=".9"/>
<ellipse cx="197.7" cy="96.0" rx="2.7" ry="3.1" fill="#7b9560" opacity=".9"/>
<ellipse cx="228.4" cy="86.6" rx="3.5" ry="1.9" fill="#514434" opacity=".9"/>
<ellipse cx="159.4" cy="8.9" rx="3.3" ry="2.2" fill="#b5d0e4" opacity=".9"/>
<ellipse cx="234.2" cy="43.2" rx="2.7" ry="4.2" fill="#3f5632" opacity=".9"/>
<ellipse cx="172.8" cy="9.2" rx="1.7" ry="2.9" fill="#33482a" opacity=".9"/>
<ellipse cx="252.1" cy="5.1" rx="1.7" ry="1.6" fill="#6a8552" opacity=".9"/>
<ellipse cx="184.4" cy="83.5" rx="3.0" ry="1.6" fill="#4d663c" opacity=".9"/>
<ellipse cx="220.7" cy="44.3" rx="2.0" ry="3.3" fill="#4d663c" opacity=".9"/>
<ellipse cx="241.7" cy="70.0" rx="2.4" ry="3.8" fill="#66523f" opacity=".9"/>
<ellipse cx="222.7" cy="81.5" rx="1.9" ry="1.9" fill="#3f5632" opacity=".9"/>
<ellipse cx="222.0" cy="44.4" rx="3.0" ry="2.5" fill="#3a3028" opacity=".9"/>
<ellipse cx="221.8" cy="70.9" rx="2.0" ry="1.7" fill="#66523f" opacity=".9"/>
<ellipse cx="175.8" cy="35.4" rx="2.8" ry="4.2" fill="#56703f" opacity=".9"/>
<ellipse cx="184.5" cy="67.7" rx="3.7" ry="2.3" fill="#4d663c" opacity=".9"/>
<ellipse cx="239.3" cy="65.0" rx="2.0" ry="2.7" fill="#48603a" opacity=".9"/>
<ellipse cx="170.9" cy="61.4" rx="2.6" ry="4.2" fill="#7b9560" opacity=".9"/>
<ellipse cx="178.7" cy="66.8" rx="1.8" ry="4.0" fill="#c9dcea" opacity=".9"/>
<ellipse cx="174.2" cy="39.9" rx="1.7" ry="4.0" fill="#4d663c" opacity=".9"/>
<ellipse cx="156.6" cy="34.3" rx="3.5" ry="4.0" fill="#7b9560" opacity=".9"/>
<ellipse cx="219.2" cy="13.9" rx="2.3" ry="3.4" fill="#2e2822" opacity=".9"/>
<ellipse cx="212.5" cy="93.8" rx="2.1" ry="3.0" fill="#48603a" opacity=".9"/>
<ellipse cx="158.9" cy="4.3" rx="3.8" ry="3.0" fill="#48603a" opacity=".9"/>
<ellipse cx="210.2" cy="47.4" rx="1.5" ry="4.2" fill="#b5d0e4" opacity=".9"/>
<ellipse cx="222.2" cy="75.8" rx="1.8" ry="2.8" fill="#33482a" opacity=".9"/>
<ellipse cx="249.1" cy="86.5" rx="2.9" ry="4.2" fill="#2e2822" opacity=".9"/>
<ellipse cx="230.9" cy="7.9" rx="2.9" ry="1.9" fill="#4a3f33" opacity=".9"/>
<ellipse cx="178.8" cy="74.9" rx="4.0" ry="3.2" fill="#48603a" opacity=".9"/>
<ellipse cx="165.4" cy="8.9" rx="2.8" ry="1.9" fill="#4d663c" opacity=".9"/>
<ellipse cx="208.0" cy="15.7" rx="1.5" ry="1.9" fill="#4d663c" opacity=".9"/>
<ellipse cx="235.5" cy="70.7" rx="3.0" ry="2.6" fill="#2e2822" opacity=".9"/>
<ellipse cx="200.4" cy="88.1" rx="2.2" ry="2.1" fill="#5c7648" opacity=".9"/>
<ellipse cx="205.0" cy="63.1" rx="4.0" ry="3.1" fill="#33482a" opacity=".9"/>
<ellipse cx="247.2" cy="8.2" rx="2.1" ry="2.5" fill="#2e2822" opacity=".9"/>
<ellipse cx="193.4" cy="45.4" rx="1.8" ry="2.4" fill="#48603a" opacity=".9"/>
<ellipse cx="204.4" cy="14.7" rx="2.1" ry="1.8" fill="#7b9560" opacity=".9"/>
<ellipse cx="187.2" cy="29.5" rx="2.8" ry="3.6" fill="#3f5632" opacity=".9"/>
<ellipse cx="187.4" cy="56.8" rx="2.4" ry="3.2" fill="#7b9560" opacity=".9"/>
<ellipse cx="186.9" cy="28.2" rx="2.7" ry="3.0" fill="#5c7648" opacity=".9"/>
<ellipse cx="228.5" cy="3.9" rx="3.5" ry="4.2" fill="#3a3028" opacity=".9"/>
<ellipse cx="217.0" cy="35.3" rx="1.7" ry="4.3" fill="#4a3f33" opacity=".9"/>
<ellipse cx="236.9" cy="30.8" rx="3.1" ry="1.7" fill="#56703f" opacity=".9"/>
<ellipse cx="229.5" cy="3.4" rx="3.1" ry="1.6" fill="#3a3028" opacity=".9"/>
<ellipse cx="248.0" cy="72.5" rx="2.7" ry="2.4" fill="#514434" opacity=".9"/>
<ellipse cx="214.6" cy="88.2" rx="2.6" ry="3.6" fill="#6a8552" opacity=".9"/>
<ellipse cx="187.9" cy="42.6" rx="3.7" ry="3.6" fill="#4d663c" opacity=".9"/>
<ellipse cx="237.3" cy="92.5" rx="3.2" ry="2.6" fill="#4d663c" opacity=".9"/>
<ellipse cx="221.7" cy="62.7" rx="2.5" ry="3.0" fill="#4d663c" opacity=".9"/>
<ellipse cx="237.7" cy="10.8" rx="3.7" ry="4.1" fill="#4a3f33" opacity=".9"/>
<ellipse cx="168.7" cy="67.6" rx="2.5" ry="3.7" fill="#48603a" opacity=".9"/>
<ellipse cx="165.0" cy="56.1" rx="3.1" ry="2.6" fill="#7b9560" opacity=".9"/>
<ellipse cx="233.8" cy="65.7" rx="2.4" ry="3.1" fill="#66523f" opacity=".9"/>
<ellipse cx="199.0" cy="94.8" rx="2.1" ry="3.6" fill="#33482a" opacity=".9"/>
<ellipse cx="209.2" cy="23.9" rx="3.3" ry="2.7" fill="#56703f" opacity=".9"/>
<ellipse cx="213.8" cy="53.5" rx="1.8" ry="2.0" fill="#33482a" opacity=".9"/>
<ellipse cx="214.0" cy="65.3" rx="2.4" ry="1.9" fill="#9fc0dc" opacity=".9"/>
<ellipse cx="200.0" cy="46.7" rx="1.7" ry="3.7" fill="#7b9560" opacity=".9"/>
<ellipse cx="170.7" cy="18.2" rx="3.4" ry="3.1" fill="#7b9560" opacity=".9"/>
<ellipse cx="244.2" cy="89.3" rx="3.5" ry="3.2" fill="#514434" opacity=".9"/>
<ellipse cx="236.8" cy="94.9" rx="2.8" ry="2.2" fill="#5a4a3a" opacity=".9"/>
<ellipse cx="178.7" cy="23.5" rx="2.2" ry="2.3" fill="#b5d0e4" opacity=".9"/>
<ellipse cx="202.1" cy="84.3" rx="2.9" ry="3.6" fill="#6a8552" opacity=".9"/>
<ellipse cx="204.8" cy="63.4" rx="2.6" ry="3.7" fill="#56703f" opacity=".9"/>
<ellipse cx="217.5" cy="51.9" rx="2.0" ry="3.3" fill="#7b9560" opacity=".9"/>
<ellipse cx="176.3" cy="69.9" rx="1.8" ry="4.2" fill="#4d663c" opacity=".9"/>
<ellipse cx="218.0" cy="5.7" rx="3.9" ry="2.0" fill="#4d663c" opacity=".9"/>
<ellipse cx="186.7" cy="33.3" rx="2.5" ry="1.9" fill="#4d663c" opacity=".9"/>
<ellipse cx="244.5" cy="94.2" rx="2.6" ry="3.4" fill="#4d663c" opacity=".9"/>
<ellipse cx="213.2" cy="89.4" rx="2.7" ry="1.7" fill="#4d663c" opacity=".9"/>
<ellipse cx="199.7" cy="53.3" rx="2.2" ry="2.4" fill="#4d663c" opacity=".9"/>
<ellipse cx="222.9" cy="90.7" rx="3.8" ry="1.6" fill="#6a8552" opacity=".9"/>
<ellipse cx="199.9" cy="56.6" rx="1.7" ry="3.0" fill="#7b9560" opacity=".9"/>
<ellipse cx="250.7" cy="1.8" rx="2.5" ry="1.9" fill="#5c7648" opacity=".9"/>
<ellipse cx="167.2" cy="58.0" rx="3.9" ry="2.1" fill="#b5d0e4" opacity=".9"/>
<ellipse cx="189.8" cy="21.4" rx="1.5" ry="3.7" fill="#3f5632" opacity=".9"/>
<ellipse cx="175.4" cy="56.1" rx="2.4" ry="3.3" fill="#7b9560" opacity=".9"/>
<ellipse cx="247.6" cy="39.3" rx="2.7" ry="3.7" fill="#66523f" opacity=".9"/>
<ellipse cx="183.0" cy="22.0" rx="2.9" ry="3.1" fill="#56703f" opacity=".9"/>
<ellipse cx="149.5" cy="29.1" rx="2.0" ry="1.6" fill="#7b9560" opacity=".9"/>
<ellipse cx="173.8" cy="7.7" rx="1.6" ry="3.1" fill="#3f5632" opacity=".9"/>
<ellipse cx="154.6" cy="5.8" rx="3.2" ry="2.2" fill="#6a8552" opacity=".9"/>
<ellipse cx="254.3" cy="19.0" rx="1.7" ry="4.2" fill="#514434" opacity=".9"/>
<ellipse cx="245.5" cy="3.8" rx="3.8" ry="1.9" fill="#48603a" opacity=".9"/>
<ellipse cx="250.8" cy="90.0" rx="3.5" ry="2.4" fill="#6a8552" opacity=".9"/>
<ellipse cx="151.7" cy="21.9" rx="3.3" ry="4.2" fill="#3f5632" opacity=".9"/>
<ellipse cx="196.1" cy="35.2" rx="3.7" ry="4.3" fill="#56703f" opacity=".9"/>
<ellipse cx="225.4" cy="65.0" rx="1.8" ry="3.0" fill="#2e2822" opacity=".9"/>
<ellipse cx="205.4" cy="54.3" rx="1.7" ry="2.1" fill="#56703f" opacity=".9"/>
<ellipse cx="155.3" cy="29.0" rx="2.3" ry="3.1" fill="#6a8552" opacity=".9"/>
<ellipse cx="178.9" cy="76.4" rx="4.0" ry="2.9" fill="#33482a" opacity=".9"/>
<ellipse cx="197.7" cy="65.2" rx="2.2" ry="1.6" fill="#48603a" opacity=".9"/>
<ellipse cx="190.4" cy="79.3" rx="3.5" ry="2.9" fill="#5c7648" opacity=".9"/>
<ellipse cx="217.6" cy="44.3" rx="3.9" ry="2.4" fill="#5c7648" opacity=".9"/>
<ellipse cx="238.6" cy="53.8" rx="2.3" ry="2.5" fill="#514434" opacity=".9"/>
<ellipse cx="242.5" cy="55.6" rx="2.1" ry="4.2" fill="#66523f" opacity=".9"/>
<ellipse cx="200.1" cy="65.1" rx="2.9" ry="4.1" fill="#6a8552" opacity=".9"/>
<ellipse cx="229.7" cy="90.2" rx="1.9" ry="4.2" fill="#66523f" opacity=".9"/>
<ellipse cx="177.7" cy="8.2" rx="1.8" ry="3.6" fill="#7b9560" opacity=".9"/>
<ellipse cx="233.5" cy="62.5" rx="2.2" ry="3.1" fill="#66523f" opacity=".9"/>
<ellipse cx="215.3" cy="44.0" rx="1.6" ry="1.9" fill="#33482a" opacity=".9"/>
<ellipse cx="152.5" cy="26.1" rx="2.1" ry="4.0" fill="#48603a" opacity=".9"/>
<ellipse cx="201.5" cy="40.5" rx="2.7" ry="2.3" fill="#4d663c" opacity=".9"/>
<ellipse cx="237.9" cy="48.0" rx="3.2" ry="2.8" fill="#5a4a3a" opacity=".9"/>
<ellipse cx="179.3" cy="64.2" rx="3.3" ry="3.8" fill="#3f5632" opacity=".9"/>
<ellipse cx="233.6" cy="15.9" rx="1.6" ry="3.8" fill="#5a4a3a" opacity=".9"/>
<ellipse cx="250.3" cy="63.2" rx="3.8" ry="4.1" fill="#514434" opacity=".9"/>
<ellipse cx="216.6" cy="5.0" rx="2.2" ry="2.6" fill="#4d663c" opacity=".9"/>
<ellipse cx="174.5" cy="58.5" rx="3.0" ry="1.8" fill="#56703f" opacity=".9"/>
<ellipse cx="225.6" cy="4.4" rx="3.7" ry="3.1" fill="#48603a" opacity=".9"/>
<ellipse cx="249.0" cy="61.3" rx="1.6" ry="4.0" fill="#3a3028" opacity=".9"/>
<ellipse cx="201.1" cy="94.7" rx="2.8" ry="2.4" fill="#4d663c" opacity=".9"/>
<ellipse cx="176.5" cy="17.0" rx="3.8" ry="4.1" fill="#4d663c" opacity=".9"/>
<ellipse cx="214.0" cy="93.0" rx="2.0" ry="4.3" fill="#7b9560" opacity=".9"/>
<ellipse cx="154.2" cy="8.1" rx="3.4" ry="2.2" fill="#5c7648" opacity=".9"/>
<ellipse cx="168.6" cy="55.6" rx="2.3" ry="4.2" fill="#7b9560" opacity=".9"/>
<ellipse cx="179.0" cy="83.0" rx="3.8" ry="3.7" fill="#48603a" opacity=".9"/>
<ellipse cx="246.1" cy="6.4" rx="3.4" ry="3.1" fill="#66523f" opacity=".9"/>
<ellipse cx="216.3" cy="90.7" rx="2.5" ry="1.5" fill="#56703f" opacity=".9"/>
<ellipse cx="156.5" cy="16.5" rx="3.9" ry="3.7" fill="#6a8552" opacity=".9"/>
<ellipse cx="210.2" cy="90.3" rx="2.6" ry="2.7" fill="#5c7648" opacity=".9"/>
<ellipse cx="158.6" cy="45.2" rx="1.5" ry="2.8" fill="#5c7648" opacity=".9"/>
<ellipse cx="213.5" cy="83.8" rx="3.4" ry="2.6" fill="#33482a" opacity=".9"/>
<ellipse cx="217.2" cy="65.5" rx="1.8" ry="1.7" fill="#9fc0dc" opacity=".9"/>
<ellipse cx="198.2" cy="0.3" rx="3.0" ry="2.1" fill="#48603a" opacity=".9"/>
<ellipse cx="173.5" cy="71.4" rx="3.1" ry="2.4" fill="#7b9560" opacity=".9"/>
<ellipse cx="224.9" cy="55.2" rx="3.5" ry="3.5" fill="#3f5632" opacity=".9"/>
<ellipse cx="195.5" cy="34.5" rx="2.0" ry="1.6" fill="#33482a" opacity=".9"/>
<ellipse cx="241.3" cy="59.7" rx="3.7" ry="2.8" fill="#514434" opacity=".9"/>
<ellipse cx="187.7" cy="86.7" rx="1.7" ry="2.1" fill="#48603a" opacity=".9"/>
<ellipse cx="171.8" cy="57.9" rx="3.1" ry="2.1" fill="#33482a" opacity=".9"/>
<ellipse cx="230.3" cy="51.5" rx="2.5" ry="3.9" fill="#514434" opacity=".9"/>
<ellipse cx="184.3" cy="40.5" rx="2.5" ry="4.3" fill="#48603a" opacity=".9"/>
<ellipse cx="235.8" cy="80.8" rx="3.3" ry="2.5" fill="#514434" opacity=".9"/>
<ellipse cx="186.5" cy="45.6" rx="4.0" ry="1.9" fill="#48603a" opacity=".9"/>
<ellipse cx="231.4" cy="30.5" rx="3.4" ry="2.5" fill="#56703f" opacity=".9"/>
<ellipse cx="250.0" cy="30.7" rx="3.1" ry="2.3" fill="#33482a" opacity=".9"/>
<ellipse cx="234.1" cy="39.8" rx="2.6" ry="3.1" fill="#66523f" opacity=".9"/>
<ellipse cx="194.5" cy="0.9" rx="1.7" ry="2.3" fill="#48603a" opacity=".9"/>
<ellipse cx="221.8" cy="66.3" rx="1.9" ry="3.1" fill="#48603a" opacity=".9"/>
<ellipse cx="202.5" cy="51.6" rx="2.3" ry="4.0" fill="#48603a" opacity=".9"/>
<ellipse cx="247.9" cy="23.2" rx="3.1" ry="1.6" fill="#4a3f33" opacity=".9"/>
<ellipse cx="167.7" cy="0.7" rx="2.2" ry="2.4" fill="#5c7648" opacity=".9"/>
<ellipse cx="214.5" cy="34.2" rx="3.2" ry="1.6" fill="#3f5632" opacity=".9"/>
<ellipse cx="246.1" cy="75.9" rx="2.1" ry="2.1" fill="#3a3028" opacity=".9"/>
<ellipse cx="214.0" cy="13.4" rx="3.7" ry="2.0" fill="#7b9560" opacity=".9"/>
<ellipse cx="166.7" cy="56.8" rx="3.3" ry="2.1" fill="#33482a" opacity=".9"/>
<ellipse cx="242.4" cy="84.2" rx="2.7" ry="3.4" fill="#5a4a3a" opacity=".9"/>
<ellipse cx="238.9" cy="71.8" rx="1.6" ry="2.4" fill="#2e2822" opacity=".9"/>
<ellipse cx="211.2" cy="73.3" rx="2.5" ry="4.1" fill="#b5d0e4" opacity=".9"/>
<ellipse cx="213.4" cy="53.0" rx="2.3" ry="2.8" fill="#6a8552" opacity=".9"/>
<ellipse cx="178.3" cy="53.7" rx="2.2" ry="1.5" fill="#c9dcea" opacity=".9"/>
<ellipse cx="186.4" cy="39.5" rx="3.6" ry="2.8" fill="#6a8552" opacity=".9"/>
<ellipse cx="202.3" cy="29.2" rx="2.7" ry="2.7" fill="#33482a" opacity=".9"/>
<ellipse cx="189.2" cy="48.1" rx="2.2" ry="2.6" fill="#3f5632" opacity=".9"/>
<ellipse cx="217.0" cy="2.5" rx="3.8" ry="3.1" fill="#3f5632" opacity=".9"/>
<ellipse cx="197.0" cy="35.1" rx="2.9" ry="4.0" fill="#4d663c" opacity=".9"/>
<ellipse cx="254.1" cy="88.6" rx="2.8" ry="2.4" fill="#5a4a3a" opacity=".9"/>
<ellipse cx="193.1" cy="53.2" rx="4.0" ry="1.7" fill="#56703f" opacity=".9"/>
<ellipse cx="254.3" cy="-0.0" rx="3.4" ry="2.8" fill="#514434" opacity=".9"/>
<ellipse cx="253.9" cy="86.5" rx="2.9" ry="2.0" fill="#4a3f33" opacity=".9"/>
<ellipse cx="197.2" cy="86.9" rx="3.1" ry="3.8" fill="#3f5632" opacity=".9"/>
<ellipse cx="254.0" cy="89.0" rx="3.1" ry="2.1" fill="#514434" opacity=".9"/>
<ellipse cx="183.1" cy="92.6" rx="2.0" ry="2.0" fill="#4d663c" opacity=".9"/>
<ellipse cx="233.1" cy="20.6" rx="3.5" ry="1.9" fill="#514434" opacity=".9"/>
<ellipse cx="168.9" cy="1.6" rx="3.9" ry="3.8" fill="#33482a" opacity=".9"/>
<ellipse cx="244.4" cy="71.4" rx="3.8" ry="1.6" fill="#4a3f33" opacity=".9"/>
<ellipse cx="207.9" cy="36.2" rx="3.1" ry="2.7" fill="#56703f" opacity=".9"/>
<ellipse cx="217.8" cy="2.1" rx="3.2" ry="1.7" fill="#56703f" opacity=".9"/>
<ellipse cx="167.2" cy="21.9" rx="3.2" ry="3.3" fill="#4d663c" opacity=".9"/>
<ellipse cx="188.4" cy="69.0" rx="3.0" ry="1.8" fill="#5c7648" opacity=".9"/>
<ellipse cx="174.4" cy="10.1" rx="2.5" ry="4.2" fill="#7b9560" opacity=".9"/>
<ellipse cx="216.5" cy="58.3" rx="3.4" ry="3.1" fill="#5c7648" opacity=".9"/>
<ellipse cx="172.9" cy="17.3" rx="3.9" ry="1.9" fill="#4d663c" opacity=".9"/>
<ellipse cx="188.5" cy="20.8" rx="3.4" ry="3.5" fill="#48603a" opacity=".9"/>
<ellipse cx="163.0" cy="14.6" rx="3.1" ry="1.9" fill="#5c7648" opacity=".9"/>
<ellipse cx="224.1" cy="12.3" rx="3.0" ry="2.1" fill="#5c7648" opacity=".9"/>
<ellipse cx="166.5" cy="42.8" rx="1.9" ry="2.0" fill="#4d663c" opacity=".9"/>
<ellipse cx="204.9" cy="35.5" rx="2.7" ry="1.6" fill="#4d663c" opacity=".9"/>
<ellipse cx="213.5" cy="17.6" rx="3.5" ry="3.9" fill="#5c7648" opacity=".9"/>
<ellipse cx="178.3" cy="26.7" rx="3.3" ry="2.5" fill="#6a8552" opacity=".9"/>
<ellipse cx="223.4" cy="87.7" rx="2.1" ry="4.3" fill="#3a3028" opacity=".9"/>
<ellipse cx="216.5" cy="60.2" rx="1.8" ry="4.3" fill="#7b9560" opacity=".9"/>
<ellipse cx="227.0" cy="83.6" rx="3.7" ry="3.1" fill="#2e2822" opacity=".9"/>
<ellipse cx="243.2" cy="96.6" rx="1.9" ry="2.6" fill="#2e2822" opacity=".9"/>
<ellipse cx="208.0" cy="11.6" rx="2.9" ry="2.1" fill="#5c7648" opacity=".9"/>
<ellipse cx="250.2" cy="36.8" rx="2.1" ry="2.5" fill="#4a3f33" opacity=".9"/>
<ellipse cx="222.0" cy="17.3" rx="3.0" ry="3.6" fill="#3f5632" opacity=".9"/>
<ellipse cx="214.8" cy="61.5" rx="3.8" ry="3.8" fill="#9fc0dc" opacity=".9"/>
<ellipse cx="166.3" cy="44.1" rx="2.9" ry="2.2" fill="#48603a" opacity=".9"/>
<ellipse cx="225.2" cy="75.3" rx="3.9" ry="2.1" fill="#514434" opacity=".9"/>
<ellipse cx="213.7" cy="14.6" rx="2.9" ry="2.0" fill="#48603a" opacity=".9"/>
<ellipse cx="219.8" cy="33.8" rx="1.8" ry="3.4" fill="#b5d0e4" opacity=".9"/>
<ellipse cx="174.7" cy="23.7" rx="1.6" ry="3.3" fill="#7b9560" opacity=".9"/>
<ellipse cx="198.5" cy="8.6" rx="2.4" ry="1.8" fill="#4d663c" opacity=".9"/>
<ellipse cx="222.7" cy="83.0" rx="3.3" ry="4.0" fill="#7b9560" opacity=".9"/>
<ellipse cx="206.9" cy="55.7" rx="3.4" ry="3.3" fill="#7b9560" opacity=".9"/>
<ellipse cx="197.7" cy="-0.3" rx="3.8" ry="1.9" fill="#56703f" opacity=".9"/>
<ellipse cx="175.8" cy="51.5" rx="4.0" ry="3.7" fill="#7b9560" opacity=".9"/>
<ellipse cx="178.4" cy="43.3" rx="3.8" ry="2.9" fill="#56703f" opacity=".9"/>
<ellipse cx="190.0" cy="45.7" rx="2.8" ry="4.2" fill="#c9dcea" opacity=".9"/>
<ellipse cx="250.0" cy="42.2" rx="3.4" ry="2.8" fill="#5a4a3a" opacity=".9"/>
<ellipse cx="178.9" cy="34.7" rx="1.5" ry="2.0" fill="#3f5632" opacity=".9"/>
<ellipse cx="162.4" cy="14.6" rx="1.9" ry="2.4" fill="#4d663c" opacity=".9"/>
<ellipse cx="177.4" cy="3.4" rx="1.8" ry="1.6" fill="#48603a" opacity=".9"/>
<ellipse cx="217.5" cy="44.8" rx="3.8" ry="2.0" fill="#3f5632" opacity=".9"/>
<ellipse cx="200.5" cy="28.8" rx="1.9" ry="2.8" fill="#4d663c" opacity=".9"/>
<ellipse cx="166.6" cy="4.6" rx="2.1" ry="3.9" fill="#5c7648" opacity=".9"/>
<ellipse cx="202.7" cy="52.3" rx="2.3" ry="2.0" fill="#6a8552" opacity=".9"/>
<ellipse cx="227.4" cy="73.1" rx="3.8" ry="2.1" fill="#514434" opacity=".9"/>
<ellipse cx="172.0" cy="22.5" rx="2.4" ry="2.0" fill="#33482a" opacity=".9"/>
<ellipse cx="252.3" cy="58.0" rx="2.8" ry="4.3" fill="#2e2822" opacity=".9"/>
<ellipse cx="236.7" cy="76.4" rx="3.1" ry="2.6" fill="#5a4a3a" opacity=".9"/>
<ellipse cx="191.4" cy="34.6" rx="2.9" ry="2.3" fill="#7b9560" opacity=".9"/>
<ellipse cx="221.4" cy="13.8" rx="2.1" ry="2.4" fill="#4a3f33" opacity=".9"/>
<ellipse cx="246.6" cy="28.3" rx="3.9" ry="3.0" fill="#5a4a3a" opacity=".9"/>
<ellipse cx="215.1" cy="51.0" rx="3.7" ry="2.5" fill="#33482a" opacity=".9"/>
<ellipse cx="198.2" cy="18.4" rx="2.3" ry="2.9" fill="#48603a" opacity=".9"/>
<ellipse cx="169.7" cy="54.5" rx="1.8" ry="1.7" fill="#33482a" opacity=".9"/>
<ellipse cx="232.6" cy="57.8" rx="2.7" ry="2.4" fill="#2e2822" opacity=".9"/>
<ellipse cx="202.8" cy="41.6" rx="3.8" ry="3.9" fill="#6a8552" opacity=".9"/>
<ellipse cx="209.1" cy="11.0" rx="3.1" ry="2.9" fill="#4d663c" opacity=".9"/>
<ellipse cx="166.4" cy="59.1" rx="3.7" ry="4.2" fill="#7b9560" opacity=".9"/>
<ellipse cx="228.9" cy="62.0" rx="1.9" ry="3.0" fill="#4d663c" opacity=".9"/>
<ellipse cx="191.7" cy="49.2" rx="3.4" ry="3.9" fill="#b5d0e4" opacity=".9"/>
<ellipse cx="251.0" cy="75.0" rx="2.9" ry="2.3" fill="#5a4a3a" opacity=".9"/>
<ellipse cx="231.2" cy="31.2" rx="2.7" ry="2.6" fill="#5c7648" opacity=".9"/>
<ellipse cx="244.8" cy="19.4" rx="3.0" ry="3.4" fill="#514434" opacity=".9"/>
<ellipse cx="191.7" cy="49.7" rx="3.2" ry="1.8" fill="#b5d0e4" opacity=".9"/>
<ellipse cx="161.9" cy="18.0" rx="3.6" ry="2.6" fill="#b5d0e4" opacity=".9"/>
<ellipse cx="252.6" cy="16.1" rx="3.1" ry="2.5" fill="#3f5632" opacity=".9"/>
<ellipse cx="193.2" cy="88.0" rx="1.8" ry="2.5" fill="#5c7648" opacity=".9"/>
<ellipse cx="173.1" cy="62.2" rx="2.6" ry="2.8" fill="#7b9560" opacity=".9"/>
<ellipse cx="187.0" cy="43.3" rx="3.2" ry="1.9" fill="#7b9560" opacity=".9"/>
<ellipse cx="203.9" cy="53.8" rx="3.2" ry="2.1" fill="#4d663c" opacity=".9"/>
<ellipse cx="184.9" cy="6.7" rx="1.8" ry="3.2" fill="#4d663c" opacity=".9"/>
<ellipse cx="237.7" cy="36.1" rx="2.6" ry="3.7" fill="#4a3f33" opacity=".9"/>
<ellipse cx="248.9" cy="18.3" rx="3.3" ry="2.4" fill="#4a3f33" opacity=".9"/>
<ellipse cx="195.9" cy="33.5" rx="1.7" ry="2.3" fill="#56703f" opacity=".9"/>
<ellipse cx="184.1" cy="50.7" rx="3.5" ry="1.8" fill="#7b9560" opacity=".9"/>
<ellipse cx="179.8" cy="42.0" rx="3.7" ry="3.9" fill="#7b9560" opacity=".9"/>
<ellipse cx="202.1" cy="3.6" rx="2.5" ry="1.7" fill="#56703f" opacity=".9"/>
<ellipse cx="239.5" cy="39.4" rx="2.3" ry="2.1" fill="#2e2822" opacity=".9"/>
<ellipse cx="191.6" cy="52.2" rx="2.6" ry="1.6" fill="#56703f" opacity=".9"/>
<ellipse cx="209.9" cy="76.7" rx="1.9" ry="2.2" fill="#c9dcea" opacity=".9"/>
<ellipse cx="233.9" cy="57.0" rx="2.6" ry="3.0" fill="#4a3f33" opacity=".9"/>
<ellipse cx="231.9" cy="53.2" rx="2.7" ry="3.7" fill="#3a3028" opacity=".9"/>
<ellipse cx="237.3" cy="86.3" rx="3.9" ry="4.0" fill="#66523f" opacity=".9"/>
<ellipse cx="237.4" cy="49.2" rx="3.0" ry="1.9" fill="#5c7648" opacity=".9"/>
<ellipse cx="244.0" cy="25.1" rx="3.3" ry="2.4" fill="#4d663c" opacity=".9"/>
<ellipse cx="242.5" cy="-0.6" rx="3.4" ry="2.3" fill="#514434" opacity=".9"/>
<ellipse cx="226.1" cy="4.6" rx="2.1" ry="2.0" fill="#c9dcea" opacity=".9"/>
<ellipse cx="209.7" cy="36.1" rx="2.9" ry="2.9" fill="#33482a" opacity=".9"/>
<ellipse cx="166.7" cy="36.4" rx="2.3" ry="1.5" fill="#48603a" opacity=".9"/>
<ellipse cx="226.5" cy="82.7" rx="2.6" ry="3.3" fill="#5a4a3a" opacity=".9"/>
<ellipse cx="212.5" cy="32.9" rx="1.8" ry="4.1" fill="#56703f" opacity=".9"/>
<ellipse cx="254.0" cy="92.0" rx="2.1" ry="3.7" fill="#4a3f33" opacity=".9"/>
<ellipse cx="244.0" cy="24.5" rx="1.8" ry="2.5" fill="#33482a" opacity=".9"/>
<ellipse cx="245.2" cy="73.5" rx="2.3" ry="3.3" fill="#514434" opacity=".9"/>
<ellipse cx="169.9" cy="20.9" rx="3.6" ry="3.9" fill="#5c7648" opacity=".9"/>
<ellipse cx="235.7" cy="54.2" rx="3.6" ry="1.6" fill="#514434" opacity=".9"/>
<ellipse cx="199.8" cy="86.3" rx="2.0" ry="2.4" fill="#33482a" opacity=".9"/>
<ellipse cx="194.1" cy="4.5" rx="3.5" ry="2.8" fill="#48603a" opacity=".9"/>
<ellipse cx="169.2" cy="42.9" rx="4.0" ry="4.1" fill="#4d663c" opacity=".9"/>
<ellipse cx="237.3" cy="12.1" rx="3.2" ry="1.6" fill="#6a8552" opacity=".9"/>
<ellipse cx="240.8" cy="58.4" rx="1.7" ry="3.3" fill="#3a3028" opacity=".9"/>
<ellipse cx="184.7" cy="95.6" rx="3.0" ry="3.8" fill="#5c7648" opacity=".9"/>
<ellipse cx="250.7" cy="78.3" rx="3.0" ry="3.2" fill="#4a3f33" opacity=".9"/>
<ellipse cx="186.6" cy="4.8" rx="4.0" ry="3.2" fill="#7b9560" opacity=".9"/>
<ellipse cx="239.2" cy="74.4" rx="2.5" ry="1.5" fill="#514434" opacity=".9"/>
<ellipse cx="182.3" cy="33.1" rx="1.7" ry="4.0" fill="#48603a" opacity=".9"/>
<ellipse cx="209.2" cy="71.6" rx="2.5" ry="3.8" fill="#4d663c" opacity=".9"/>
<ellipse cx="183.7" cy="94.5" rx="1.5" ry="2.3" fill="#56703f" opacity=".9"/>
<ellipse cx="243.8" cy="27.3" rx="3.2" ry="2.5" fill="#3a3028" opacity=".9"/>
<ellipse cx="191.1" cy="86.3" rx="3.3" ry="1.7" fill="#6a8552" opacity=".9"/>
<ellipse cx="237.8" cy="95.7" rx="1.8" ry="2.7" fill="#2e2822" opacity=".9"/>
<ellipse cx="197.1" cy="36.2" rx="2.5" ry="1.7" fill="#c9dcea" opacity=".9"/>
<ellipse cx="219.3" cy="24.1" rx="2.6" ry="3.9" fill="#2e2822" opacity=".9"/>
<ellipse cx="252.5" cy="53.8" rx="2.1" ry="3.8" fill="#514434" opacity=".9"/>
<ellipse cx="155.2" cy="8.4" rx="3.3" ry="3.1" fill="#6a8552" opacity=".9"/>
<ellipse cx="236.2" cy="11.5" rx="3.6" ry="2.9" fill="#33482a" opacity=".9"/>
<ellipse cx="195.5" cy="25.0" rx="3.2" ry="1.8" fill="#5c7648" opacity=".9"/>
<ellipse cx="224.9" cy="67.5" rx="2.5" ry="3.0" fill="#6a8552" opacity=".9"/>
<ellipse cx="176.8" cy="26.8" rx="2.4" ry="2.0" fill="#c9dcea" opacity=".9"/>
<ellipse cx="228.2" cy="94.9" rx="3.8" ry="3.5" fill="#5a4a3a" opacity=".9"/>
<ellipse cx="183.1" cy="36.9" rx="2.0" ry="1.9" fill="#56703f" opacity=".9"/>
<ellipse cx="192.4" cy="34.8" rx="2.0" ry="2.7" fill="#7b9560" opacity=".9"/>
<ellipse cx="197.1" cy="33.5" rx="1.8" ry="2.4" fill="#5c7648" opacity=".9"/>
<ellipse cx="238.9" cy="77.8" rx="3.9" ry="4.1" fill="#2e2822" opacity=".9"/>
<ellipse cx="246.8" cy="51.7" rx="1.7" ry="2.3" fill="#5a4a3a" opacity=".9"/>
<ellipse cx="185.3" cy="6.7" rx="2.1" ry="3.9" fill="#3f5632" opacity=".9"/>
<ellipse cx="171.4" cy="33.9" rx="3.5" ry="2.2" fill="#6a8552" opacity=".9"/>
<ellipse cx="235.9" cy="22.6" rx="2.9" ry="2.6" fill="#5c7648" opacity=".9"/>
<ellipse cx="173.1" cy="42.7" rx="2.0" ry="2.9" fill="#33482a" opacity=".9"/>
<ellipse cx="177.4" cy="52.9" rx="1.6" ry="1.8" fill="#7b9560" opacity=".9"/>
<ellipse cx="248.1" cy="81.9" rx="1.9" ry="3.5" fill="#5a4a3a" opacity=".9"/>
<ellipse cx="248.8" cy="19.1" rx="2.4" ry="3.9" fill="#4a3f33" opacity=".9"/>
<ellipse cx="236.9" cy="39.5" rx="1.8" ry="3.2" fill="#3a3028" opacity=".9"/>
<ellipse cx="216.6" cy="77.2" rx="2.6" ry="2.6" fill="#6a8552" opacity=".9"/>
<ellipse cx="203.4" cy="60.7" rx="2.0" ry="2.9" fill="#33482a" opacity=".9"/>
<ellipse cx="225.9" cy="80.2" rx="3.4" ry="2.8" fill="#66523f" opacity=".9"/>
<ellipse cx="253.6" cy="27.1" rx="3.4" ry="4.0" fill="#56703f" opacity=".9"/>
<ellipse cx="246.8" cy="25.3" rx="3.7" ry="3.1" fill="#514434" opacity=".9"/>
<ellipse cx="214.0" cy="53.1" rx="1.7" ry="2.7" fill="#7b9560" opacity=".9"/>
<ellipse cx="235.4" cy="71.2" rx="3.5" ry="4.2" fill="#66523f" opacity=".9"/>
<ellipse cx="236.0" cy="65.3" rx="1.7" ry="2.7" fill="#2e2822" opacity=".9"/>
<ellipse cx="212.9" cy="83.7" rx="3.8" ry="3.2" fill="#6a8552" opacity=".9"/>
<ellipse cx="249.1" cy="54.7" rx="2.6" ry="3.9" fill="#3a3028" opacity=".9"/>
<ellipse cx="249.0" cy="56.6" rx="2.4" ry="3.9" fill="#2e2822" opacity=".9"/>
<ellipse cx="202.4" cy="44.7" rx="1.9" ry="1.5" fill="#c9dcea" opacity=".9"/>
<ellipse cx="209.3" cy="22.8" rx="2.9" ry="2.2" fill="#56703f" opacity=".9"/>
<ellipse cx="234.6" cy="19.4" rx="2.9" ry="2.2" fill="#2e2822" opacity=".9"/>
<ellipse cx="216.9" cy="29.1" rx="2.1" ry="1.7" fill="#2e2822" opacity=".9"/>
<ellipse cx="167.7" cy="64.6" rx="2.4" ry="4.1" fill="#33482a" opacity=".9"/>
<ellipse cx="236.6" cy="80.5" rx="3.0" ry="3.1" fill="#5a4a3a" opacity=".9"/>
<ellipse cx="182.0" cy="35.9" rx="2.5" ry="2.0" fill="#3f5632" opacity=".9"/>
<ellipse cx="241.3" cy="63.9" rx="3.6" ry="3.0" fill="#5a4a3a" opacity=".9"/>
<ellipse cx="203.0" cy="58.1" rx="2.9" ry="2.2" fill="#6a8552" opacity=".9"/>
<ellipse cx="160.4" cy="41.8" rx="2.8" ry="2.8" fill="#c9dcea" opacity=".9"/>
<ellipse cx="156.3" cy="21.0" rx="1.7" ry="3.0" fill="#9fc0dc" opacity=".9"/>
<ellipse cx="165.6" cy="61.7" rx="1.8" ry="2.9" fill="#33482a" opacity=".9"/>
<ellipse cx="203.8" cy="50.3" rx="3.9" ry="3.2" fill="#4d663c" opacity=".9"/>
<ellipse cx="206.3" cy="74.0" rx="2.7" ry="4.0" fill="#7b9560" opacity=".9"/>
<ellipse cx="206.4" cy="33.6" rx="2.3" ry="1.9" fill="#33482a" opacity=".9"/>
<ellipse cx="194.4" cy="10.4" rx="2.6" ry="3.6" fill="#3f5632" opacity=".9"/>
<ellipse cx="212.3" cy="60.8" rx="2.9" ry="1.6" fill="#9fc0dc" opacity=".9"/>
<ellipse cx="198.9" cy="70.0" rx="2.4" ry="2.0" fill="#48603a" opacity=".9"/>
<ellipse cx="243.0" cy="16.0" rx="2.0" ry="2.3" fill="#2e2822" opacity=".9"/>
<ellipse cx="217.4" cy="43.0" rx="2.6" ry="3.3" fill="#3f5632" opacity=".9"/>
<ellipse cx="196.7" cy="14.7" rx="3.5" ry="3.2" fill="#33482a" opacity=".9"/>
<ellipse cx="253.2" cy="78.8" rx="2.3" ry="4.2" fill="#66523f" opacity=".9"/>
<ellipse cx="211.7" cy="25.3" rx="2.1" ry="2.5" fill="#5c7648" opacity=".9"/>
<ellipse cx="200.4" cy="42.1" rx="3.0" ry="2.3" fill="#3f5632" opacity=".9"/>
<ellipse cx="214.0" cy="45.1" rx="3.9" ry="3.0" fill="#6a8552" opacity=".9"/>
<ellipse cx="183.2" cy="23.6" rx="4.0" ry="3.2" fill="#48603a" opacity=".9"/>
<ellipse cx="214.3" cy="36.2" rx="2.9" ry="3.0" fill="#48603a" opacity=".9"/>
<path d="M182.0 95.0 L158.7 38.6" stroke="#332b22" stroke-width="1.7" opacity=".85"/>
<path d="M196.9 95.0 L180.3 21.9" stroke="#332b22" stroke-width="1.7" opacity=".85"/>
<path d="M210.2 95.0 L206.9 26.9" stroke="#332b22" stroke-width="1.7" opacity=".85"/>
<path d="M228.5 105.0 L226.8 13.6" stroke="#332b22" stroke-width="2.7" opacity=".85"/>
<path d="M245.1 105.0 L241.8 8.6" stroke="#332b22" stroke-width="3.0" opacity=".85"/>
<path d="M220.2 95.0 L221.8 38.6" stroke="#332b22" stroke-width="1.7" opacity=".85"/>
<path d="M193.6 91.7 L205.2 43.5" stroke="#332b22" stroke-width="1.3" opacity=".85"/>
<path d="M236.8 105.0 L233.5 21.9" stroke="#332b22" stroke-width="2.0" opacity=".85"/>
</g>
<g filter="url(#b3)">
<polygon fill="#54453e" points="186.9,95.0 210.2,92.6 233.5,95.0 233.5,105.0 186.9,103.4"/>
<polygon fill="#2f3947" points="182.8,103.4 255.1,108.3 255.1,143.2 188.6,143.2"/>
<rect x="193.6" y="111.7" width="1.6" height="28.2" fill="#8d99a6" opacity=".75"/>
<rect x="199.9" y="111.7" width="1.6" height="28.2" fill="#8d99a6" opacity=".75"/>
<rect x="206.2" y="111.7" width="1.6" height="28.2" fill="#8d99a6" opacity=".75"/>
<rect x="212.5" y="111.7" width="1.6" height="28.2" fill="#8d99a6" opacity=".75"/>
<rect x="218.8" y="111.7" width="1.6" height="28.2" fill="#8d99a6" opacity=".75"/>
<rect x="225.2" y="111.7" width="1.6" height="28.2" fill="#8d99a6" opacity=".75"/>
<rect x="231.5" y="111.7" width="1.6" height="28.2" fill="#8d99a6" opacity=".75"/>
<rect x="237.8" y="111.7" width="1.6" height="28.2" fill="#8d99a6" opacity=".75"/>
<rect x="244.1" y="111.7" width="1.6" height="28.2" fill="#8d99a6" opacity=".75"/>
<rect x="250.4" y="111.7" width="1.6" height="28.2" fill="#8d99a6" opacity=".75"/>
<polygon fill="#5d6b7c" points="182.8,103.4 255.1,107.5 255.1,110.8 183.6,106.3"/>
</g>
<g filter="url(#b1)">
<polygon fill="#c4ecf6" points="44.0,143.2 59.0,111.7 88.9,96.7 153.7,95.9 178.6,105.0 190.3,121.6 199.4,143.2"/>
<polygon fill="#2e6fd8" points="54.8,115.0 62.3,108.3 88.9,96.4 108.8,95.0 105.5,111.7 82.3,115.0 67.3,113.3"/>
<polygon fill="#2b62cc" points="147.1,95.0 157.0,95.9 175.3,103.4 182.0,111.7 165.3,116.7 160.4,121.6 148.7,121.6"/>
<polygon fill="#93838e" points="98.9,105.0 145.4,105.0 143.7,131.6 127.1,141.6 112.2,131.6"/>
<ellipse cx="121.6" cy="81.8" rx="33.7" ry="49.9" fill="#a3919c"/>
<ellipse cx="120.5" cy="60.2" rx="26.6" ry="18.3" fill="#b8a6ab"/>
<ellipse cx="122.1" cy="103.4" rx="10.0" ry="10.0" fill="#cbbac0"/>
<path fill="#231c18" d="M86.4 66.8 C82.3 30.2 102.2 18.6 122.1 19.1 C143.7 19.4 158.7 35.2 156.2 66.8 C153.7 51.8 143.7 43.5 122.1 42.2 C102.2 42.2 90.6 50.2 86.4 66.8 Z"/>
<ellipse cx="103.9" cy="80.4" rx="6.3" ry="1.8" fill="#2e2522"/><ellipse cx="136.3" cy="80.4" rx="6.3" ry="1.8" fill="#2e2522"/>
<ellipse cx="119.1" cy="117.6" rx="8.6" ry="2.8" fill="#d8446a"/>
</g>
<circle cx="200.2" cy="14.0" r="5" fill="#e8622c"/><circle cx="200.2" cy="14.0" r="2.2" fill="#f6c9a8"/>
<text x="207.2" y="17.3" font-family="Liberation Sans,Noto Sans CJK SC,sans-serif" font-weight="bold" font-size="7.6" fill="#f3f3f3" opacity=".92">凤凰视频</text>
</g></svg>
<div class="abs" style="left:1650px;top:538.3px;width:108.8px;height:27.2px;background:rgba(14,20,27,.78)"></div>
<svg style="left:1654.5px;top:541px" width="20" height="21" viewBox="0 0 20 21"><path d="M2.2 9.6 C2.2 17.4 16.2 17.4 16.2 9.6" fill="none" stroke="#f4f4f4" stroke-width="1.9"/><path d="M9.2 15.4 V19.4" stroke="#f4f4f4" stroke-width="2.2"/><rect x="5.2" y="1.2" width="8" height="13.2" rx="4" fill="#4fd44f"/><rect x="5.2" y="1.2" width="8" height="5.4" rx="3.6" fill="#c9f5c9" opacity=".75"/></svg>
<div class="abs" id="vname" style="left:1679.3px;top:541.5px;height:20px;line-height:20px;font-size:14px;color:#fff;white-space:nowrap;-webkit-text-stroke:.35px #fff">HuangYong</div>
<!--/OVERLAYS-->
</div>
</body>
</html>
